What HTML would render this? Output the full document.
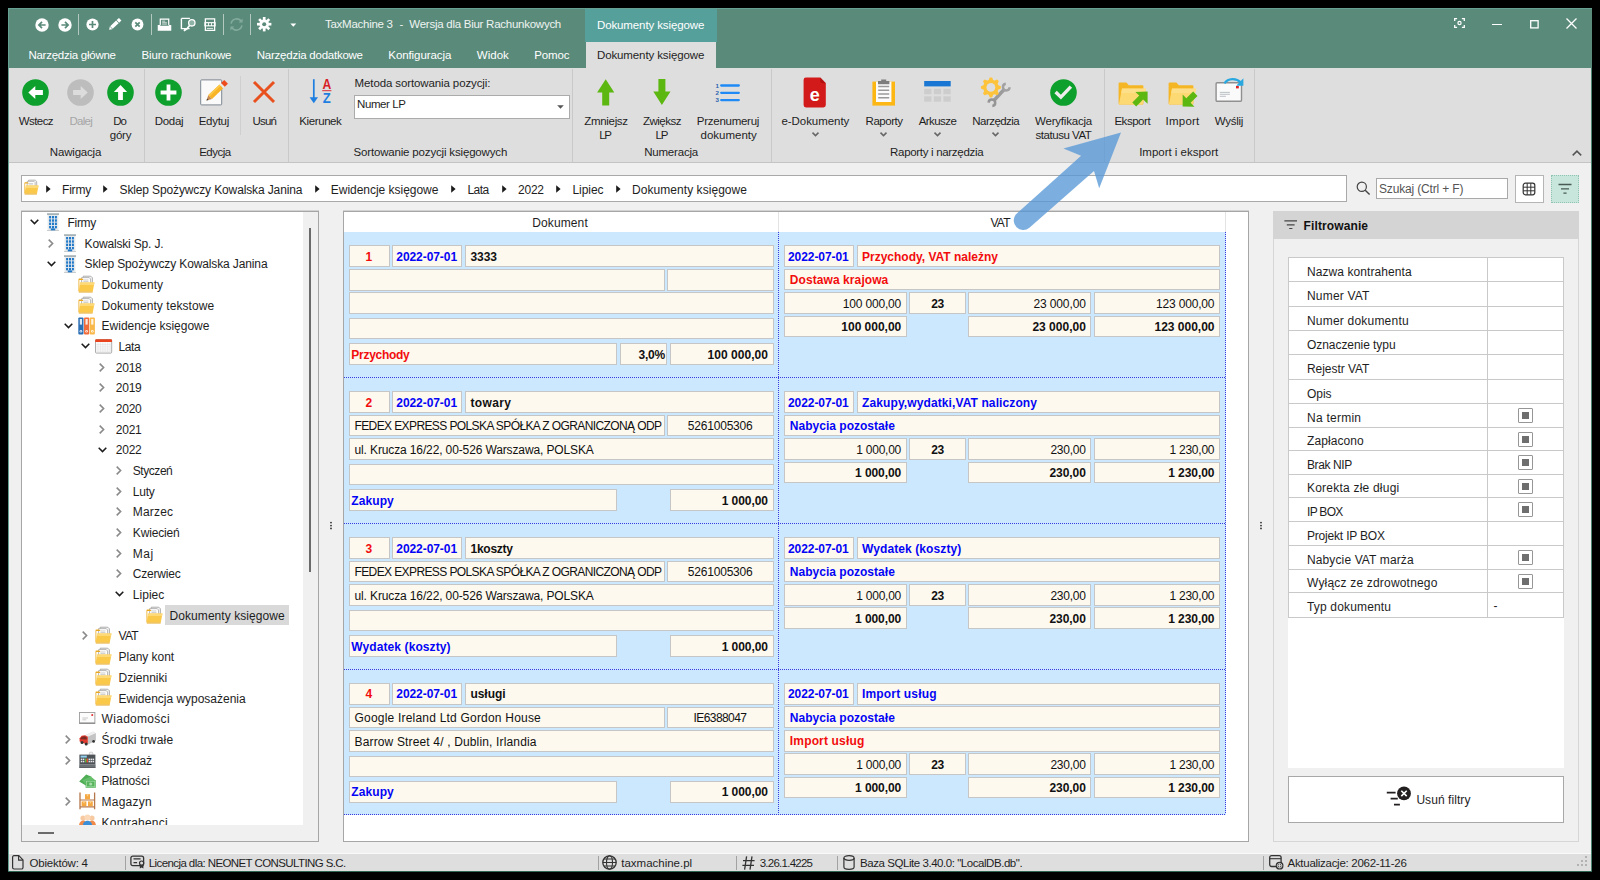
<!DOCTYPE html>
<html lang="pl"><head><meta charset="utf-8"><title>TaxMachine 3 - Dokumenty księgowe</title>
<style>
html,body{margin:0;padding:0;}
body{width:1600px;height:880px;background:#000;overflow:hidden;position:relative;font-family:'Liberation Sans', sans-serif;font-size:12px;color:#1e1e1e;}
.a{position:absolute;box-sizing:border-box;}
.t{white-space:pre;}
svg{overflow:visible;}
</style></head><body>
<div class="a" style="left:8px;top:8px;width:1584px;height:864px;background:#f0f0f0;"></div>
<div class="a" style="left:8px;top:8px;width:1584px;height:60px;background:#5a8a7a;"></div>
<div class="a" style="left:585px;top:8px;width:132px;height:34px;background:#55a09b;"></div>
<div class="a" style="left:586px;top:42px;width:130px;height:26px;background:#dedede;"></div>
<div class="a" style="left:8px;top:68px;width:1584px;height:95px;background:#dedede;border-bottom:1px solid #c4c4c4;"></div>
<div class="a" style="left:8px;top:853px;width:1584px;height:1px;background:#f9f9f9;"></div>
<div class="a" style="left:8px;top:854px;width:1584px;height:18px;background:#dedede;"></div>
<div class="a" style="left:8px;top:8px;width:1px;height:864px;background:#66a092;"></div>
<div class="a" style="left:1591px;top:68px;width:1px;height:804px;background:#4d8573;"></div>
<div class="a" style="left:8px;top:871px;width:1584px;height:1px;background:#2f6553;"></div>
<div class="a" style="left:8px;top:8px;width:1584px;height:1px;background:#66a092;"></div>
<svg class="a" style="left:35.2px;top:17.6px;" width="14" height="14" viewBox="0 0 14 14"><circle cx="7" cy="7" r="6.700" fill="#ffffff"/><path d="M10.600 7H4M7 3.900L3.900 7l3.100 3.100" stroke="#5a8a7a" stroke-width="1.700" fill="none"/></svg>
<svg class="a" style="left:57.6px;top:17.6px;" width="14" height="14" viewBox="0 0 14 14"><circle cx="7" cy="7" r="6.700" fill="#ffffff"/><path d="M3.400 7h6.600M7 3.900L10.100 7 7 10.100" stroke="#5a8a7a" stroke-width="1.700" fill="none"/></svg>
<div class="a" style="left:78px;top:14px;width:1px;height:21px;background:#b3c9c0;"></div>
<div class="a" style="left:151px;top:14px;width:1px;height:21px;background:#b3c9c0;"></div>
<div class="a" style="left:223px;top:14px;width:1px;height:21px;background:#b3c9c0;"></div>
<div class="a" style="left:250px;top:14px;width:1px;height:21px;background:#b3c9c0;"></div>
<svg class="a" style="left:85.5px;top:18px;" width="13" height="13" viewBox="0 0 13 13"><circle cx="6.500" cy="6.500" r="6.100" fill="#ffffff"/><path d="M6.500 3v7M3 6.500h7" stroke="#5a8a7a" stroke-width="1.700"/></svg>
<svg class="a" style="left:107px;top:17px;" width="15" height="15" viewBox="0 0 15 15"><path d="M2.10 12.70L2.82 9.54L5.30 12.15ZM3.19 9.19L9.14 3.56L11.62 6.17L5.66 11.81ZM9.65 3.08L11.96 0.89L14.44 3.51L12.13 5.69Z" fill="#ffffff"/></svg>
<svg class="a" style="left:130.6px;top:18px;" width="13" height="13" viewBox="0 0 13 13"><circle cx="6.500" cy="6.500" r="5.900" fill="#ffffff"/><path d="M4.300 4.300l4.400 4.400M8.700 4.300l-4.400 4.400" stroke="#5a8a7a" stroke-width="1.700"/></svg>
<svg class="a" style="left:156.8px;top:18px;" width="15" height="13.2" viewBox="0 0 16 15"><path d="M0.3 8h15.4v6.5H0.3z" fill="#ffffff"/><path d="M3.2 1.2h9.6v7.5H3.2z" fill="#5a8a7a" stroke="#ffffff" stroke-width="1.4"/><path d="M5.3 3.6h3.5M5.3 5.4h5.4M5.3 7h5.4" stroke="#ffffff" stroke-width="0.8"/><path d="M3.2 8.4h9.6" stroke="#5a8a7a" stroke-width="1"/></svg>
<svg class="a" style="left:179.5px;top:17px;" width="16" height="15" viewBox="0 0 16 15"><path d="M1.4 1.4h8.5M1.4 1.4v10.2h4.2l-1.6 2.2 3.4-2.2h2.2" fill="none" stroke="#ffffff" stroke-width="1.4"/><circle cx="11.8" cy="5.8" r="3.2" fill="#8db3a6" stroke="#ffffff" stroke-width="1.3"/><path d="M9.6 8.4l-3 3.6" stroke="#ffffff" stroke-width="1.6"/></svg>
<svg class="a" style="left:204.3px;top:18px;" width="12" height="13.2" viewBox="0 0 14 15"><path d="M1.6 0.8h10.8v13.4H1.6z" fill="none" stroke="#ffffff" stroke-width="1.5"/><path d="M0.4 4.6h13.2v5H0.4z" fill="#ffffff"/><path d="M2.4 6h2.4v2.2H2.4zM5.8 6h2.4v2.2H5.8zM9.2 6h2.4v2.2H9.2z" fill="#5a8a7a"/><path d="M3.4 12h7.2" stroke="#ffffff" stroke-width="0.9"/></svg>
<svg class="a" style="left:229px;top:17px;" width="15" height="15" viewBox="0 0 15 15"><path d="M2.1 6.6A5.6 5.6 0 0 1 12.4 4.6" fill="none" stroke="#82ab9d" stroke-width="1.6"/><path d="M13.6 1.6v4h-4z" fill="#82ab9d"/><path d="M12.9 8.4A5.6 5.6 0 0 1 2.6 10.4" fill="none" stroke="#82ab9d" stroke-width="1.6"/><path d="M1.4 13.4v-4h4z" fill="#82ab9d"/></svg>
<svg class="a" style="left:257px;top:17.4px;" width="14.4" height="14.4" viewBox="0 0 15 15"><rect x="6.1" y="0" width="2.8" height="3.4" transform="rotate(0 7.5 7.5)" fill="#ffffff"/><rect x="6.1" y="0" width="2.8" height="3.4" transform="rotate(45 7.5 7.5)" fill="#ffffff"/><rect x="6.1" y="0" width="2.8" height="3.4" transform="rotate(90 7.5 7.5)" fill="#ffffff"/><rect x="6.1" y="0" width="2.8" height="3.4" transform="rotate(135 7.5 7.5)" fill="#ffffff"/><rect x="6.1" y="0" width="2.8" height="3.4" transform="rotate(180 7.5 7.5)" fill="#ffffff"/><rect x="6.1" y="0" width="2.8" height="3.4" transform="rotate(225 7.5 7.5)" fill="#ffffff"/><rect x="6.1" y="0" width="2.8" height="3.4" transform="rotate(270 7.5 7.5)" fill="#ffffff"/><rect x="6.1" y="0" width="2.8" height="3.4" transform="rotate(315 7.5 7.5)" fill="#ffffff"/><circle cx="7.5" cy="7.5" r="5" fill="#ffffff"/><circle cx="7.5" cy="7.5" r="2.1" fill="#5a8a7a"/></svg>
<svg class="a" style="left:290.2px;top:23.4px;" width="6.6" height="4" viewBox="0 0 8 5"><path d="M0.300 0.600h7.400L4 4.600z" fill="#ffffff"/></svg>
<span class="a t" style="left:325.00px;top:17px;font-size:11.5px;line-height:15px;color:#eef4f1;letter-spacing:-0.270px;">TaxMachine 3</span>
<span class="a t" style="left:399.50px;top:17px;font-size:11.5px;line-height:15px;color:#eef4f1;">-</span>
<span class="a t" style="left:409.30px;top:17px;font-size:11.5px;line-height:15px;color:#eef4f1;letter-spacing:-0.258px;">Wersja dla Biur Rachunkowych</span>
<span class="a t" style="left:597.00px;top:18px;font-size:11.5px;line-height:15px;color:#ffffff;letter-spacing:-0.118px;">Dokumenty księgowe</span>
<span class="a t" style="left:28.40px;top:48px;font-size:11.5px;line-height:15px;color:#ffffff;letter-spacing:-0.255px;">Narzędzia główne</span>
<span class="a t" style="left:141.50px;top:48px;font-size:11.5px;line-height:15px;color:#ffffff;letter-spacing:-0.138px;">Biuro rachunkowe</span>
<span class="a t" style="left:256.80px;top:48px;font-size:11.5px;line-height:15px;color:#ffffff;letter-spacing:-0.244px;">Narzędzia dodatkowe</span>
<span class="a t" style="left:388.30px;top:48px;font-size:11.5px;line-height:15px;color:#ffffff;letter-spacing:-0.085px;">Konfiguracja</span>
<span class="a t" style="left:476.80px;top:48px;font-size:11.5px;line-height:15px;color:#ffffff;letter-spacing:0.012px;">Widok</span>
<span class="a t" style="left:534.30px;top:48px;font-size:11.5px;line-height:15px;color:#ffffff;letter-spacing:-0.149px;">Pomoc</span>
<span class="a t" style="left:597.00px;top:48px;font-size:11.5px;line-height:15px;color:#1e1e1e;letter-spacing:-0.118px;">Dokumenty księgowe</span>
<svg class="a" style="left:1453.7px;top:18.4px;" width="11" height="10" viewBox="0 0 11 10"><path d="M0.700 3V0.700h2.400M7.900 0.700h2.400V3M10.300 7v2.300H7.900M3.100 9.300H0.700V7" fill="none" stroke="#ffffff" stroke-width="1.300"/><circle cx="5.500" cy="5" r="1.600" fill="none" stroke="#ffffff" stroke-width="1.200"/></svg>
<div class="a" style="left:1492px;top:23.5px;width:9.5px;height:1.4px;background:#ffffff;"></div>
<svg class="a" style="left:1529.5px;top:19.5px;" width="9" height="9" viewBox="0 0 9 9"><rect x="0.700" y="0.700" width="7.400" height="7.200" fill="none" stroke="#ffffff" stroke-width="1.300"/></svg>
<svg class="a" style="left:1566px;top:18px;" width="11" height="11" viewBox="0 0 11 11"><path d="M0.5 0.5l10 10M10.5 0.5l-10 10" stroke="#ffffff" stroke-width="1.300"/></svg>
<div class="a" style="left:143.5px;top:69px;width:1px;height:93px;background:#c9c9c9;"></div>
<div class="a" style="left:288px;top:69px;width:1px;height:93px;background:#c9c9c9;"></div>
<div class="a" style="left:572px;top:69px;width:1px;height:93px;background:#c9c9c9;"></div>
<div class="a" style="left:770.5px;top:69px;width:1px;height:93px;background:#c9c9c9;"></div>
<div class="a" style="left:1103.5px;top:69px;width:1px;height:93px;background:#c9c9c9;"></div>
<div class="a" style="left:1254px;top:69px;width:1px;height:93px;background:#c9c9c9;"></div>
<div class="a" style="left:240px;top:76px;width:1px;height:59px;background:#cfcfcf;"></div>
<svg class="a" style="left:22.0px;top:78.7px;" width="27" height="27" viewBox="0 0 27 27"><circle cx="13.5" cy="13.5" r="13.3" fill="#0da02c"/><path d="M6.3 13.5l7-6.6v4.2h7.6v4.8h-7.6v4.2z" fill="#fff"/></svg>
<svg class="a" style="left:67.3px;top:78.7px;" width="27" height="27" viewBox="0 0 27 27"><circle cx="13.5" cy="13.5" r="13.3" fill="#bdbdbd"/><path d="M20.7 13.5l-7-6.6v4.2H6.1v4.8h7.6v4.2z" fill="#dcdcdc"/></svg>
<svg class="a" style="left:106.8px;top:78.7px;" width="27" height="27" viewBox="0 0 27 27"><circle cx="13.5" cy="13.5" r="13.3" fill="#0da02c"/><path d="M13.5 6.1l6.6 7h-4.2v7.8h-4.8v-7.8H6.9z" fill="#fff"/></svg>
<svg class="a" style="left:154.9px;top:78.7px;" width="27" height="27" viewBox="0 0 27 27"><circle cx="13.5" cy="13.5" r="13.3" fill="#0da02c"/><path d="M11.600 5.600h3.800v6h6v3.800h-6v6h-3.800v-6H5.600v-3.800h6z" fill="#fff"/></svg>
<svg class="a" style="left:199px;top:78px;" width="30" height="29" viewBox="0 0 30 29"><rect x="1.700" y="1.900" width="21" height="25" rx="0.800" fill="#fafafa" stroke="#7d8892" stroke-width="1"/><path d="M7.45 22.60L9.38 17.09L13.04 20.92Z" fill="#c98a4f"/><path d="M7.45 22.60L8.15 20.59L9.49 21.99Z" fill="#3a3a3a"/><path d="M9.38 17.09L20.50 6.44L24.17 10.27L13.04 20.92Z" fill="#f8b425"/><path d="M9.38 17.09L20.50 6.44L21.75 7.74L10.62 18.39Z" fill="#fcc84a"/><path d="M20.50 6.44L22.09 4.92L25.76 8.75L24.17 10.27Z" fill="#ecebe6"/><path d="M22.09 4.92L25.27 1.89L28.93 5.71L25.76 8.75Z" fill="#ee4b1d"/></svg>
<svg class="a" style="left:252px;top:80px;" width="24" height="24" viewBox="0 0 24 24"><path d="M2 2l20 20M22 2L2 22" stroke="#e8501e" stroke-width="3" fill="none"/></svg>
<svg class="a" style="left:308px;top:77px;" width="26" height="28" viewBox="0 0 26 28"><path d="M5.8 2.2v21" stroke="#1e7fe0" stroke-width="1.7"/><path d="M1.6 20.2l4.2 6 4.2-6z" fill="#1e7fe0"/><text x="14.400" y="12.400" font-family="'Liberation Sans',sans-serif" font-weight="700" font-size="14" fill="#d81e26" textLength="8.800" lengthAdjust="spacingAndGlyphs">A</text><path d="M14.200 13.700h9.200" stroke="#d81e26" stroke-width="0.900"/><text x="14.800" y="26" font-family="'Liberation Sans',sans-serif" font-weight="700" font-size="14" fill="#1e7fe0" textLength="8" lengthAdjust="spacingAndGlyphs">Z</text></svg>
<svg class="a" style="left:596px;top:78px;" width="20" height="28" viewBox="0 0 20 28"><path d="M9.7 1.2l8.6 13.4h-5.1v12.8H6.2V14.6H1.1z" fill="#5cb811"/></svg>
<svg class="a" style="left:652px;top:78px;" width="20" height="28" viewBox="0 0 20 28"><path d="M9.9 26.9l8.6-13.4h-5.1V0.9H6.4v12.6H1.3z" fill="#5cb811"/></svg>
<svg class="a" style="left:714px;top:81px;" width="28" height="24" viewBox="0 0 28 24"><path d="M7.2 4.5h17.6M7.2 11.8h17.6M7.2 19.1h17.6" stroke="#1f8af6" stroke-width="2.3" stroke-linecap="round"/><text x="1.6" y="6.6" font-family="'Liberation Sans',sans-serif" font-weight="700" font-size="6.2" fill="#2d62b0">1</text><text x="1.6" y="13.9" font-family="'Liberation Sans',sans-serif" font-weight="700" font-size="6.2" fill="#2d62b0">2</text><text x="1.6" y="21.2" font-family="'Liberation Sans',sans-serif" font-weight="700" font-size="6.2" fill="#2d62b0">3</text></svg>
<svg class="a" style="left:803px;top:76.5px;" width="24" height="31" viewBox="0 0 24 31"><path d="M3 0.6h14.2l5.6 5.6V28a2.4 2.4 0 0 1-2.4 2.4H3A2.4 2.4 0 0 1 .6 28V3A2.4 2.4 0 0 1 3 .6z" fill="#d21a1a"/><path d="M17.2 0.6v3.4a2.2 2.2 0 0 0 2.2 2.2h3.4z" fill="#b51010"/><text x="11.8" y="23.6" font-family="'Liberation Sans',sans-serif" font-weight="700" font-size="18" fill="#fff" text-anchor="middle">e</text></svg>
<svg class="a" style="left:872px;top:78.5px;" width="24" height="27" viewBox="0 0 24 27"><path d="M0.4 2.6h22.6v24H0.4z" fill="#fdb714"/><path d="M4 2.6h15.4v20.4H4z" fill="#fbfbfb"/><path d="M6 1.9h3.2v-1.3h5v1.3h3.2v3.4H6z" fill="#7d7d7d"/><path d="M6.2 7.6h11M6.2 11.3h11M6.2 15h11M6.2 18.7h11" stroke="#9a9a9a" stroke-width="1.5"/></svg>
<svg class="a" style="left:924px;top:81px;" width="27" height="21" viewBox="0 0 27 21"><rect x="0.2" y="0" width="26.5" height="5.4" fill="#1976d2"/><rect x="0.2" y="7.8" width="7.3" height="5.4" fill="#cdcdcd"/><rect x="9.8" y="7.8" width="7.3" height="5.4" fill="#cdcdcd"/><rect x="19.4" y="7.8" width="7.3" height="5.4" fill="#cdcdcd"/><rect x="0.2" y="15.3" width="7.3" height="5.4" fill="#cdcdcd"/><rect x="9.8" y="15.3" width="7.3" height="5.4" fill="#cdcdcd"/><rect x="19.4" y="15.3" width="7.3" height="5.4" fill="#cdcdcd"/></svg>
<svg class="a" style="left:980px;top:76px;" width="32" height="32" viewBox="0 0 32 32"><path d="M13.66 24.83L24.49 13.02" stroke="#9b9b9b" stroke-width="3.500" fill="none"/><path d="M8.60 26.60A3.3 3.3 0 1 1 12.33 30.02" stroke="#959595" stroke-width="2.500" fill="none"/><path d="M29.55 11.25A3.3 3.3 0 1 1 25.82 7.83" stroke="#a2a2a2" stroke-width="2.500" fill="none"/><path d="M10.90 1.40L11.29 1.41L11.68 1.43L12.07 1.54L12.37 2.10L12.63 2.72L12.83 3.35L13.01 3.92L13.28 4.08L13.57 4.18L13.85 4.29L14.12 4.41L14.40 4.54L14.70 4.62L15.23 4.34L15.82 4.04L16.44 3.78L17.05 3.60L17.39 3.80L17.69 4.06L17.97 4.33L18.24 4.61L18.50 4.91L18.70 5.25L18.52 5.86L18.26 6.48L17.96 7.07L17.68 7.60L17.76 7.90L17.89 8.18L18.01 8.45L18.12 8.73L18.22 9.02L18.38 9.29L18.95 9.47L19.58 9.67L20.20 9.93L20.76 10.23L20.87 10.62L20.89 11.01L20.90 11.40L20.89 11.79L20.87 12.18L20.76 12.57L20.20 12.87L19.58 13.13L18.95 13.33L18.38 13.51L18.22 13.78L18.12 14.07L18.01 14.35L17.89 14.62L17.76 14.90L17.68 15.20L17.96 15.73L18.26 16.32L18.52 16.94L18.70 17.55L18.50 17.89L18.24 18.19L17.97 18.47L17.69 18.74L17.39 19.00L17.05 19.20L16.44 19.02L15.82 18.76L15.23 18.46L14.70 18.18L14.40 18.26L14.12 18.39L13.85 18.51L13.57 18.62L13.28 18.72L13.01 18.88L12.83 19.45L12.63 20.08L12.37 20.70L12.07 21.26L11.68 21.37L11.29 21.39L10.90 21.40L10.51 21.39L10.12 21.37L9.73 21.26L9.43 20.70L9.17 20.08L8.97 19.45L8.79 18.88L8.52 18.72L8.23 18.62L7.95 18.51L7.68 18.39L7.40 18.26L7.10 18.18L6.57 18.46L5.98 18.76L5.36 19.02L4.75 19.20L4.41 19.00L4.11 18.74L3.83 18.47L3.56 18.19L3.30 17.89L3.10 17.55L3.28 16.94L3.54 16.32L3.84 15.73L4.12 15.20L4.04 14.90L3.91 14.62L3.79 14.35L3.68 14.07L3.58 13.78L3.42 13.51L2.85 13.33L2.22 13.13L1.60 12.87L1.04 12.57L0.93 12.18L0.91 11.79L0.90 11.40L0.91 11.01L0.93 10.62L1.04 10.23L1.60 9.93L2.22 9.67L2.85 9.47L3.42 9.29L3.58 9.02L3.68 8.73L3.79 8.45L3.91 8.18L4.04 7.90L4.12 7.60L3.84 7.07L3.54 6.48L3.28 5.86L3.10 5.25L3.30 4.91L3.56 4.61L3.83 4.33L4.11 4.06L4.41 3.80L4.75 3.60L5.36 3.78L5.98 4.04L6.57 4.34L7.10 4.62L7.40 4.54L7.68 4.41L7.95 4.29L8.23 4.18L8.52 4.08L8.79 3.92L8.97 3.35L9.17 2.72L9.43 2.10L9.73 1.54L10.12 1.43L10.51 1.41Z" fill="#fdc33a"/><circle cx="10.90" cy="11.40" r="4.400" fill="#dedede"/></svg>
<svg class="a" style="left:1049.7px;top:78.7px;" width="27" height="27" viewBox="0 0 27 27"><circle cx="13.5" cy="13.5" r="13.3" fill="#0da02c"/><path d="M5.600 13l5.300 5.200 10-10.500" stroke="#ededed" stroke-width="3.400" fill="none"/></svg>
<svg class="a" style="left:1117.6px;top:82.4px;" width="31" height="26" viewBox="0 0 31 26"><path d="M0.6 1.6a1 1 0 0 1 1-1h6.8l2.4 2.6h13.6a1 1 0 0 1 1 1V21.4a1 1 0 0 1-1 1H1.6a1 1 0 0 1-1-1z" fill="#f5b626"/><path d="M4 6.4h24.2L24.8 22.4H0.9z" fill="#fdd974"/><path d="M4 6.4h24.2l-1 4.6H3z" fill="#fee39a" opacity=".6"/><path d="M29.600 9.500V21.800L25.100 17.500L18.200 24.400L14.300 20.500L21.200 13.600L17.300 9.900Z" fill="#5cb811"/></svg>
<svg class="a" style="left:1168.4px;top:82.4px;" width="31" height="26" viewBox="0 0 31 26"><path d="M0.6 1.6a1 1 0 0 1 1-1h6.8l2.4 2.6h13.6a1 1 0 0 1 1 1V21.4a1 1 0 0 1-1 1H1.6a1 1 0 0 1-1-1z" fill="#f5b626"/><path d="M4 6.4h24.2L24.8 22.4H0.9z" fill="#fdd974"/><path d="M4 6.4h24.2l-1 4.6H3z" fill="#fee39a" opacity=".6"/><path d="M14.650 24.400V12.600L18.300 16.300L25.150 9.500L29.500 13.900L22.650 20.800L26.500 24.700Z" fill="#5cb811"/></svg>
<svg class="a" style="left:1214px;top:77px;" width="31" height="26" viewBox="0 0 31 26"><rect x="2.100" y="5.700" width="25.400" height="18.500" rx="1" fill="#fafafa" stroke="#8f8f8f" stroke-width="1.400"/><path d="M5.800 15.400h10.100M5.800 17.300h10.100M5.800 19.300h6.100" stroke="#b4bac0" stroke-width="0.900"/><rect x="22" y="9" width="2.8" height="2.4" fill="#e02424"/><path d="M10.4 6.4C14 1.2 22 0.6 27 5.6" fill="none" stroke="#29a8e0" stroke-width="2.300"/><path d="M29.4 1.2v7.6h-7.2z" fill="#29a8e0"/></svg>
<svg class="a" style="left:811.5px;top:132.4px;" width="7" height="5" viewBox="0 0 7 5"><path d="M0.5 0.6l3 3 3-3" fill="none" stroke="#666" stroke-width="1.500"/></svg>
<svg class="a" style="left:880.3px;top:132.4px;" width="7" height="5" viewBox="0 0 7 5"><path d="M0.5 0.6l3 3 3-3" fill="none" stroke="#666" stroke-width="1.500"/></svg>
<svg class="a" style="left:933.7px;top:132.4px;" width="7" height="5" viewBox="0 0 7 5"><path d="M0.5 0.6l3 3 3-3" fill="none" stroke="#666" stroke-width="1.500"/></svg>
<svg class="a" style="left:992.2px;top:132.4px;" width="7" height="5" viewBox="0 0 7 5"><path d="M0.5 0.6l3 3 3-3" fill="none" stroke="#666" stroke-width="1.500"/></svg>
<span class="a t" style="left:18.80px;top:114px;font-size:11.5px;line-height:15px;color:#1e1e1e;letter-spacing:-0.581px;">Wstecz</span>
<span class="a t" style="left:69.50px;top:114px;font-size:11.5px;line-height:15px;color:#a6a6a6;letter-spacing:-0.755px;">Dalej</span>
<span class="a t" style="left:113.20px;top:114px;font-size:11.5px;line-height:15px;color:#1e1e1e;letter-spacing:-1.103px;">Do</span>
<span class="a t" style="left:109.65px;top:128px;font-size:11.5px;line-height:15px;color:#1e1e1e;letter-spacing:-0.158px;">góry</span>
<span class="a t" style="left:154.70px;top:114px;font-size:11.5px;line-height:15px;color:#1e1e1e;letter-spacing:-0.266px;">Dodaj</span>
<span class="a t" style="left:198.70px;top:114px;font-size:11.5px;line-height:15px;color:#1e1e1e;letter-spacing:-0.274px;">Edytuj</span>
<span class="a t" style="left:252.50px;top:114px;font-size:11.5px;line-height:15px;color:#1e1e1e;letter-spacing:-0.820px;">Usuń</span>
<span class="a t" style="left:299.35px;top:114px;font-size:11.5px;line-height:15px;color:#1e1e1e;letter-spacing:-0.413px;">Kierunek</span>
<span class="a t" style="left:584.35px;top:114px;font-size:11.5px;line-height:15px;color:#1e1e1e;letter-spacing:-0.331px;">Zmniejsz</span>
<span class="a t" style="left:599.16px;top:128px;font-size:11.5px;line-height:15px;color:#1e1e1e;letter-spacing:-1.200px;">LP</span>
<span class="a t" style="left:643.00px;top:114px;font-size:11.5px;line-height:15px;color:#1e1e1e;letter-spacing:-0.522px;">Zwiększ</span>
<span class="a t" style="left:655.56px;top:128px;font-size:11.5px;line-height:15px;color:#1e1e1e;letter-spacing:-1.200px;">LP</span>
<span class="a t" style="left:696.85px;top:114px;font-size:11.5px;line-height:15px;color:#1e1e1e;letter-spacing:-0.270px;">Przenumeruj</span>
<span class="a t" style="left:700.55px;top:128px;font-size:11.5px;line-height:15px;color:#1e1e1e;">dokumenty</span>
<span class="a t" style="left:781.45px;top:114px;font-size:11.5px;line-height:15px;color:#1e1e1e;letter-spacing:-0.049px;">e-Dokumenty</span>
<span class="a t" style="left:865.55px;top:114px;font-size:11.5px;line-height:15px;color:#1e1e1e;letter-spacing:-0.464px;">Raporty</span>
<span class="a t" style="left:918.75px;top:114px;font-size:11.5px;line-height:15px;color:#1e1e1e;letter-spacing:-0.574px;">Arkusze</span>
<span class="a t" style="left:972.30px;top:114px;font-size:11.5px;line-height:15px;color:#1e1e1e;letter-spacing:-0.548px;">Narzędzia</span>
<span class="a t" style="left:1035.00px;top:114px;font-size:11.5px;line-height:15px;color:#1e1e1e;letter-spacing:-0.202px;">Weryfikacja</span>
<span class="a t" style="left:1035.55px;top:128px;font-size:11.5px;line-height:15px;color:#1e1e1e;letter-spacing:-0.464px;">statusu VAT</span>
<span class="a t" style="left:1114.40px;top:114px;font-size:11.5px;line-height:15px;color:#1e1e1e;letter-spacing:-0.467px;">Eksport</span>
<span class="a t" style="left:1165.55px;top:114px;font-size:11.5px;line-height:15px;color:#1e1e1e;letter-spacing:0.221px;">Import</span>
<span class="a t" style="left:1214.65px;top:114px;font-size:11.5px;line-height:15px;color:#1e1e1e;letter-spacing:-0.244px;">Wyślij</span>
<span class="a t" style="left:49.80px;top:145px;font-size:11.5px;line-height:15px;color:#1e1e1e;letter-spacing:-0.183px;">Nawigacja</span>
<span class="a t" style="left:199.20px;top:145px;font-size:11.5px;line-height:15px;color:#1e1e1e;letter-spacing:-0.506px;">Edycja</span>
<span class="a t" style="left:353.50px;top:145px;font-size:11.5px;line-height:15px;color:#1e1e1e;letter-spacing:-0.169px;">Sortowanie pozycji księgowych</span>
<span class="a t" style="left:644.20px;top:145px;font-size:11.5px;line-height:15px;color:#1e1e1e;letter-spacing:-0.201px;">Numeracja</span>
<span class="a t" style="left:890.05px;top:145px;font-size:11.5px;line-height:15px;color:#1e1e1e;letter-spacing:-0.310px;">Raporty i narzędzia</span>
<span class="a t" style="left:1139.20px;top:145px;font-size:11.5px;line-height:15px;color:#1e1e1e;letter-spacing:-0.017px;">Import i eksport</span>
<span class="a t" style="left:354.60px;top:76px;font-size:11.5px;line-height:15px;color:#1e1e1e;letter-spacing:-0.117px;">Metoda sortowania pozycji:</span>
<div class="a" style="left:353.5px;top:94.5px;width:216px;height:24px;background:#fff;border:1px solid #ababab;"></div>
<span class="a t" style="left:357.00px;top:97px;font-size:11.5px;line-height:15px;color:#1e1e1e;letter-spacing:-0.397px;">Numer LP</span>
<svg class="a" style="left:556.5px;top:104.5px;" width="7" height="4" viewBox="0 0 7 4"><path d="M0.2 0.3h6.6L3.5 3.7z" fill="#555"/></svg>
<svg class="a" style="left:1572.4px;top:149.8px;" width="10" height="7" viewBox="0 0 10 7"><path d="M0.700 5.400l4.250-4.300 4.250 4.300" fill="none" stroke="#555" stroke-width="1.500"/></svg>
<div class="a" style="left:21px;top:175px;width:1326px;height:27px;background:#fff;border:1px solid #a9a9a9;"></div>
<svg class="a" style="left:23.5px;top:179px;" width="15" height="16" viewBox="0 0 17 18"><path d="M5.2 1.2h7.6l1.6 1.6v6H5.2z" fill="#f4f4f4" stroke="#9b9b9b" stroke-width=".8"/><path d="M3.6 2.6h7.6l1.4 1.4v6H3.6z" fill="#fdfdfd" stroke="#a5a5a5" stroke-width=".8"/><path d="M5.4 5h5M5.4 6.6h5" stroke="#b9b9b9" stroke-width=".7"/><path d="M0.5 4.4a.8.8 0 0 1 .8-.8h3l1.2 1.4h-4.2v11h-.8z" fill="#e9a820"/><path d="M2.2 7.4h14.3l-1.7 9.1H0.6z" fill="#fbc94a"/><path d="M2.2 7.4h14.3l-.5 2.6H1.8z" fill="#fdd977"/><path d="M0.6 16.5h14.2l-.2.9H0.8z" fill="#e8a51c"/></svg>
<span class="a t" style="left:62.00px;top:182px;font-size:12px;line-height:16px;color:#1e1e1e;letter-spacing:-0.200px;">Firmy</span>
<svg class="a" style="left:45.8px;top:184.6px;" width="5" height="8" viewBox="0 0 5 8"><path d="M0.2 0.3l4.4 3.7-4.400 3.700z" fill="#1a1a1a"/></svg>
<span class="a t" style="left:119.50px;top:182px;font-size:12px;line-height:16px;color:#1e1e1e;letter-spacing:-0.126px;">Sklep Spożywczy Kowalska Janina</span>
<svg class="a" style="left:103.3px;top:184.6px;" width="5" height="8" viewBox="0 0 5 8"><path d="M0.2 0.3l4.4 3.7-4.400 3.700z" fill="#1a1a1a"/></svg>
<span class="a t" style="left:330.80px;top:182px;font-size:12px;line-height:16px;color:#1e1e1e;letter-spacing:-0.027px;">Ewidencje księgowe</span>
<svg class="a" style="left:314.6px;top:184.6px;" width="5" height="8" viewBox="0 0 5 8"><path d="M0.2 0.3l4.4 3.7-4.400 3.700z" fill="#1a1a1a"/></svg>
<span class="a t" style="left:467.50px;top:182px;font-size:12px;line-height:16px;color:#1e1e1e;letter-spacing:-0.586px;">Lata</span>
<svg class="a" style="left:451.3px;top:184.6px;" width="5" height="8" viewBox="0 0 5 8"><path d="M0.2 0.3l4.4 3.7-4.400 3.700z" fill="#1a1a1a"/></svg>
<span class="a t" style="left:518.00px;top:182px;font-size:12px;line-height:16px;color:#1e1e1e;letter-spacing:-0.234px;">2022</span>
<svg class="a" style="left:501.8px;top:184.6px;" width="5" height="8" viewBox="0 0 5 8"><path d="M0.2 0.3l4.4 3.7-4.400 3.700z" fill="#1a1a1a"/></svg>
<span class="a t" style="left:572.50px;top:182px;font-size:12px;line-height:16px;color:#1e1e1e;letter-spacing:-0.072px;">Lipiec</span>
<svg class="a" style="left:556.3px;top:184.6px;" width="5" height="8" viewBox="0 0 5 8"><path d="M0.2 0.3l4.4 3.7-4.400 3.700z" fill="#1a1a1a"/></svg>
<span class="a t" style="left:632.00px;top:182px;font-size:12px;line-height:16px;color:#1e1e1e;letter-spacing:0.055px;">Dokumenty księgowe</span>
<svg class="a" style="left:615.8px;top:184.6px;" width="5" height="8" viewBox="0 0 5 8"><path d="M0.2 0.3l4.4 3.7-4.400 3.700z" fill="#1a1a1a"/></svg>
<svg class="a" style="left:1355.5px;top:181px;" width="15" height="15" viewBox="0 0 15 15"><circle cx="5.800" cy="5.800" r="4.600" fill="none" stroke="#444" stroke-width="1.2"/><path d="M9.200 9.200l4.400 4.400" stroke="#444" stroke-width="1.400"/></svg>
<div class="a" style="left:1376px;top:178px;width:132px;height:21px;background:#fff;border:1px solid #a9a9a9;"></div>
<span class="a t" style="left:1379.00px;top:181px;font-size:12px;line-height:16px;color:#555;letter-spacing:-0.157px;">Szukaj (Ctrl + F)</span>
<div class="a" style="left:1515px;top:175px;width:29px;height:28px;background:#fff;border:1px solid #b5b5b5;"></div>
<svg class="a" style="left:1522px;top:182px;" width="14" height="14" viewBox="0 0 14 14"><rect x="1.200" y="1.200" width="11.600" height="11.600" rx="2.200" fill="none" stroke="#333" stroke-width="1.200"/><path d="M5.200 1.200v11.600M8.800 1.200v11.600M1.200 5.200h11.600M1.200 8.800h11.600" stroke="#333" stroke-width="1"/></svg>
<div class="a" style="left:1551px;top:175px;width:28px;height:28px;background:#c9e6dd;border:1px dotted #8fc4b3;"></div>
<svg class="a" style="left:1558px;top:183px;" width="14" height="12" viewBox="0 0 14 12"><path d="M0.500 1.500h13M3 5.800h8M5.400 10.100h3.200" stroke="#4a5a55" stroke-width="1.300"/></svg>
<svg class="a" style="left:328.8px;top:520px;" width="4" height="12" viewBox="0 0 4 12"><circle cx="2" cy="2.6" r=".9" fill="#2e2e2e"/><circle cx="2" cy="5.6" r=".9" fill="#2e2e2e"/><circle cx="2" cy="8.4" r=".9" fill="#2e2e2e"/></svg>
<svg class="a" style="left:1258.6px;top:520px;" width="4" height="12" viewBox="0 0 4 12"><circle cx="2" cy="2.6" r=".9" fill="#2e2e2e"/><circle cx="2" cy="5.6" r=".9" fill="#2e2e2e"/><circle cx="2" cy="8.4" r=".9" fill="#2e2e2e"/></svg>
<div class="a" style="left:21px;top:211px;width:298px;height:631px;background:#fff;border:1px solid #a6a6a6;"></div>
<div class="a" style="left:21px;top:210px;width:298px;height:1px;background:#d2d2d2;"></div>
<div class="a" style="left:303px;top:212px;width:15px;height:613px;background:#f0f0f0;"></div>
<div class="a" style="left:309.4px;top:228px;width:2px;height:344px;background:#6b6b6b;"></div>
<div class="a" style="left:22px;top:825px;width:296px;height:16px;background:#f0f0f0;"></div>
<div class="a" style="left:37.5px;top:832px;width:16px;height:2px;background:#6b6b6b;"></div>
<div class="a" style="left:22px;top:212px;width:281px;height:613px;overflow:hidden">
<svg class="a" style="left:7.5px;top:7.25px;" width="9" height="6" viewBox="0 0 9 6"><path d="M0.700 0.700l3.800 3.900 3.800-3.900" fill="none" stroke="#1c1c1c" stroke-width="1.500"/></svg>
<svg class="a" style="left:25px;top:1.25px;" width="12" height="18" viewBox="0 0 12 18"><rect x="0.6" y="1" width="10.8" height="16.6" fill="#e7eaec"/><rect x="0" y="0.4" width="12" height="1.3" fill="#8c9aa0"/><rect x="0" y="17.2" width="12" height=".7" fill="#b8bcbe"/><rect x="2.1" y="3" width="2" height="2.4" fill="#1f78c8"/><rect x="5" y="3" width="2" height="2.4" fill="#1f78c8"/><rect x="7.9" y="3" width="2" height="2.4" fill="#1f78c8"/><rect x="2.1" y="6.3" width="2" height="2.4" fill="#1f78c8"/><rect x="5" y="6.3" width="2" height="2.4" fill="#1f78c8"/><rect x="7.9" y="6.3" width="2" height="2.4" fill="#1f78c8"/><rect x="2.1" y="9.6" width="2" height="2.4" fill="#1f78c8"/><rect x="5" y="9.6" width="2" height="2.4" fill="#1f78c8"/><rect x="7.9" y="9.6" width="2" height="2.4" fill="#1f78c8"/><rect x="2.1" y="12.9" width="2" height="2.4" fill="#1f78c8"/><rect x="5" y="12.9" width="2" height="2.4" fill="#1f78c8"/><rect x="7.9" y="12.9" width="2" height="2.4" fill="#1f78c8"/><rect x="3.8" y="15.4" width="4.4" height="1.9" fill="#1f78c8"/></svg>
<span class="a t" style="left:45.60px;top:3px;font-size:12px;line-height:16px;color:#1e1e1e;letter-spacing:-0.350px;">Firmy</span>
<svg class="a" style="left:26.4px;top:26.53px;" width="6" height="9" viewBox="0 0 6 9"><path d="M0.700 0.600l3.900 3.900-3.900 3.900" fill="none" stroke="#8a8a8a" stroke-width="1.600"/></svg>
<svg class="a" style="left:42px;top:21.930000000000007px;" width="12" height="18" viewBox="0 0 12 18"><rect x="0.6" y="1" width="10.8" height="16.6" fill="#e7eaec"/><rect x="0" y="0.4" width="12" height="1.3" fill="#8c9aa0"/><rect x="0" y="17.2" width="12" height=".7" fill="#b8bcbe"/><rect x="2.1" y="3" width="2" height="2.4" fill="#1f78c8"/><rect x="5" y="3" width="2" height="2.4" fill="#1f78c8"/><rect x="7.9" y="3" width="2" height="2.4" fill="#1f78c8"/><rect x="2.1" y="6.3" width="2" height="2.4" fill="#1f78c8"/><rect x="5" y="6.3" width="2" height="2.4" fill="#1f78c8"/><rect x="7.9" y="6.3" width="2" height="2.4" fill="#1f78c8"/><rect x="2.1" y="9.6" width="2" height="2.4" fill="#1f78c8"/><rect x="5" y="9.6" width="2" height="2.4" fill="#1f78c8"/><rect x="7.9" y="9.6" width="2" height="2.4" fill="#1f78c8"/><rect x="2.1" y="12.9" width="2" height="2.4" fill="#1f78c8"/><rect x="5" y="12.9" width="2" height="2.4" fill="#1f78c8"/><rect x="7.9" y="12.9" width="2" height="2.4" fill="#1f78c8"/><rect x="3.8" y="15.4" width="4.4" height="1.9" fill="#1f78c8"/></svg>
<span class="a t" style="left:62.60px;top:24px;font-size:12px;line-height:16px;color:#1e1e1e;letter-spacing:-0.170px;">Kowalski Sp. J.</span>
<svg class="a" style="left:24.5px;top:48.610000000000014px;" width="9" height="6" viewBox="0 0 9 6"><path d="M0.700 0.700l3.800 3.900 3.800-3.900" fill="none" stroke="#1c1c1c" stroke-width="1.500"/></svg>
<svg class="a" style="left:42px;top:42.610000000000014px;" width="12" height="18" viewBox="0 0 12 18"><rect x="0.6" y="1" width="10.8" height="16.6" fill="#e7eaec"/><rect x="0" y="0.4" width="12" height="1.3" fill="#8c9aa0"/><rect x="0" y="17.2" width="12" height=".7" fill="#b8bcbe"/><rect x="2.1" y="3" width="2" height="2.4" fill="#1f78c8"/><rect x="5" y="3" width="2" height="2.4" fill="#1f78c8"/><rect x="7.9" y="3" width="2" height="2.4" fill="#1f78c8"/><rect x="2.1" y="6.3" width="2" height="2.4" fill="#1f78c8"/><rect x="5" y="6.3" width="2" height="2.4" fill="#1f78c8"/><rect x="7.9" y="6.3" width="2" height="2.4" fill="#1f78c8"/><rect x="2.1" y="9.6" width="2" height="2.4" fill="#1f78c8"/><rect x="5" y="9.6" width="2" height="2.4" fill="#1f78c8"/><rect x="7.9" y="9.6" width="2" height="2.4" fill="#1f78c8"/><rect x="2.1" y="12.9" width="2" height="2.4" fill="#1f78c8"/><rect x="5" y="12.9" width="2" height="2.4" fill="#1f78c8"/><rect x="7.9" y="12.9" width="2" height="2.4" fill="#1f78c8"/><rect x="3.8" y="15.4" width="4.4" height="1.9" fill="#1f78c8"/></svg>
<span class="a t" style="left:62.60px;top:44px;font-size:12px;line-height:16px;color:#1e1e1e;letter-spacing:-0.126px;">Sklep Spożywczy Kowalska Janina</span>
<svg class="a" style="left:55.900000000000006px;top:62.89000000000004px;" width="17" height="18" viewBox="0 0 17 18"><path d="M5.2 1.2h7.6l1.6 1.6v6H5.2z" fill="#f4f4f4" stroke="#9b9b9b" stroke-width=".8"/><path d="M3.6 2.6h7.6l1.4 1.4v6H3.6z" fill="#fdfdfd" stroke="#a5a5a5" stroke-width=".8"/><path d="M5.4 5h5M5.4 6.6h5" stroke="#b9b9b9" stroke-width=".7"/><path d="M0.5 4.4a.8.8 0 0 1 .8-.8h3l1.2 1.4h-4.2v11h-.8z" fill="#e9a820"/><path d="M2.2 7.4h14.3l-1.7 9.1H0.6z" fill="#fbc94a"/><path d="M2.2 7.4h14.3l-.5 2.6H1.8z" fill="#fdd977"/><path d="M0.6 16.5h14.2l-.2.9H0.8z" fill="#e8a51c"/></svg>
<span class="a t" style="left:79.60px;top:65px;font-size:12px;line-height:16px;color:#1e1e1e;letter-spacing:0.100px;">Dokumenty</span>
<svg class="a" style="left:55.900000000000006px;top:83.57000000000005px;" width="17" height="18" viewBox="0 0 17 18"><path d="M5.2 1.2h7.6l1.6 1.6v6H5.2z" fill="#f4f4f4" stroke="#9b9b9b" stroke-width=".8"/><path d="M3.6 2.6h7.6l1.4 1.4v6H3.6z" fill="#fdfdfd" stroke="#a5a5a5" stroke-width=".8"/><path d="M5.4 5h5M5.4 6.6h5" stroke="#b9b9b9" stroke-width=".7"/><path d="M0.5 4.4a.8.8 0 0 1 .8-.8h3l1.2 1.4h-4.2v11h-.8z" fill="#e9a820"/><path d="M2.2 7.4h14.3l-1.7 9.1H0.6z" fill="#fbc94a"/><path d="M2.2 7.4h14.3l-.5 2.6H1.8z" fill="#fdd977"/><path d="M0.6 16.5h14.2l-.2.9H0.8z" fill="#e8a51c"/></svg>
<span class="a t" style="left:79.60px;top:86px;font-size:12px;line-height:16px;color:#1e1e1e;letter-spacing:0.065px;">Dokumenty tekstowe</span>
<svg class="a" style="left:41.5px;top:110.64999999999998px;" width="9" height="6" viewBox="0 0 9 6"><path d="M0.700 0.700l3.800 3.900 3.800-3.900" fill="none" stroke="#1c1c1c" stroke-width="1.500"/></svg>
<svg class="a" style="left:55.900000000000006px;top:104.84999999999997px;" width="17" height="18" viewBox="0 0 17 18"><rect x="0.3" y="0.4" width="5.2" height="17.2" rx="1" fill="#2c6fb5"/><rect x="1.8" y="2" width="2.2" height="5.6" fill="#fff" opacity=".85"/><circle cx="2.9" cy="14.2" r="1.3" fill="#fff" opacity=".9"/><circle cx="2.9" cy="14.2" r=".5" fill="#2c6fb5"/><rect x="6.0" y="0.4" width="5.2" height="17.2" rx="1" fill="#f26b3a"/><rect x="7.5" y="2" width="2.2" height="5.6" fill="#fff" opacity=".85"/><circle cx="8.6" cy="14.2" r="1.3" fill="#fff" opacity=".9"/><circle cx="8.6" cy="14.2" r=".5" fill="#f26b3a"/><rect x="11.700000000000001" y="0.4" width="5.2" height="17.2" rx="1" fill="#f9b84a"/><rect x="13.200000000000001" y="2" width="2.2" height="5.6" fill="#fff" opacity=".85"/><circle cx="14.3" cy="14.2" r="1.3" fill="#fff" opacity=".9"/><circle cx="14.3" cy="14.2" r=".5" fill="#f9b84a"/></svg>
<span class="a t" style="left:79.60px;top:106px;font-size:12px;line-height:16px;color:#1e1e1e;letter-spacing:-0.015px;">Ewidencje księgowe</span>
<svg class="a" style="left:58.5px;top:131.32999999999998px;" width="9" height="6" viewBox="0 0 9 6"><path d="M0.700 0.700l3.800 3.900 3.800-3.900" fill="none" stroke="#1c1c1c" stroke-width="1.500"/></svg>
<svg class="a" style="left:73.1px;top:126.93px;" width="17" height="15" viewBox="0 0 17 15"><rect x="0.5" y="0.5" width="16.2" height="13.6" rx="1" fill="#fbfbfb" stroke="#a2a2a2" stroke-width=".9"/><path d="M3 3.4v10.4" stroke="#dcdcdc" stroke-width=".5"/><path d="M5.4 3.4v10.4" stroke="#dcdcdc" stroke-width=".5"/><path d="M7.8 3.4v10.4" stroke="#dcdcdc" stroke-width=".5"/><path d="M10.2 3.4v10.4" stroke="#dcdcdc" stroke-width=".5"/><path d="M12.6 3.4v10.4" stroke="#dcdcdc" stroke-width=".5"/><path d="M15 3.4v10.4" stroke="#dcdcdc" stroke-width=".5"/><path d="M0.8 5.6h15.6" stroke="#dcdcdc" stroke-width=".5"/><path d="M0.8 7.8h15.6" stroke="#dcdcdc" stroke-width=".5"/><path d="M0.8 10h15.6" stroke="#dcdcdc" stroke-width=".5"/><path d="M0.8 12.2h15.6" stroke="#dcdcdc" stroke-width=".5"/><path d="M0.2 1.2a1 1 0 0 1 1-1h14.8a1 1 0 0 1 1 1v1.7H0.2z" fill="#e9441d"/></svg>
<span class="a t" style="left:96.60px;top:127px;font-size:12px;line-height:16px;color:#1e1e1e;letter-spacing:-0.453px;">Lata</span>
<svg class="a" style="left:77.4px;top:150.61px;" width="6" height="9" viewBox="0 0 6 9"><path d="M0.700 0.600l3.900 3.900-3.900 3.900" fill="none" stroke="#8a8a8a" stroke-width="1.600"/></svg>
<span class="a t" style="left:93.80px;top:148px;font-size:12px;line-height:16px;color:#1e1e1e;letter-spacing:-0.234px;">2018</span>
<svg class="a" style="left:77.4px;top:171.29000000000002px;" width="6" height="9" viewBox="0 0 6 9"><path d="M0.700 0.600l3.900 3.900-3.900 3.900" fill="none" stroke="#8a8a8a" stroke-width="1.600"/></svg>
<span class="a t" style="left:93.80px;top:168px;font-size:12px;line-height:16px;color:#1e1e1e;letter-spacing:-0.234px;">2019</span>
<svg class="a" style="left:77.4px;top:191.97000000000003px;" width="6" height="9" viewBox="0 0 6 9"><path d="M0.700 0.600l3.900 3.900-3.900 3.900" fill="none" stroke="#8a8a8a" stroke-width="1.600"/></svg>
<span class="a t" style="left:93.80px;top:189px;font-size:12px;line-height:16px;color:#1e1e1e;letter-spacing:-0.234px;">2020</span>
<svg class="a" style="left:77.4px;top:212.65000000000003px;" width="6" height="9" viewBox="0 0 6 9"><path d="M0.700 0.600l3.900 3.900-3.900 3.900" fill="none" stroke="#8a8a8a" stroke-width="1.600"/></svg>
<span class="a t" style="left:93.80px;top:210px;font-size:12px;line-height:16px;color:#1e1e1e;letter-spacing:-0.234px;">2021</span>
<svg class="a" style="left:75.5px;top:234.73000000000002px;" width="9" height="6" viewBox="0 0 9 6"><path d="M0.700 0.700l3.800 3.900 3.800-3.900" fill="none" stroke="#1c1c1c" stroke-width="1.500"/></svg>
<span class="a t" style="left:93.80px;top:230px;font-size:12px;line-height:16px;color:#1e1e1e;letter-spacing:-0.234px;">2022</span>
<svg class="a" style="left:94.4px;top:254.01px;" width="6" height="9" viewBox="0 0 6 9"><path d="M0.700 0.600l3.900 3.900-3.900 3.900" fill="none" stroke="#8a8a8a" stroke-width="1.600"/></svg>
<span class="a t" style="left:110.80px;top:251px;font-size:12px;line-height:16px;color:#1e1e1e;letter-spacing:-0.448px;">Styczeń</span>
<svg class="a" style="left:94.4px;top:274.69px;" width="6" height="9" viewBox="0 0 6 9"><path d="M0.700 0.600l3.900 3.900-3.900 3.900" fill="none" stroke="#8a8a8a" stroke-width="1.600"/></svg>
<span class="a t" style="left:110.80px;top:272px;font-size:12px;line-height:16px;color:#1e1e1e;letter-spacing:-0.229px;">Luty</span>
<svg class="a" style="left:94.4px;top:295.37px;" width="6" height="9" viewBox="0 0 6 9"><path d="M0.700 0.600l3.900 3.900-3.900 3.900" fill="none" stroke="#8a8a8a" stroke-width="1.600"/></svg>
<span class="a t" style="left:110.80px;top:292px;font-size:12px;line-height:16px;color:#1e1e1e;letter-spacing:0.191px;">Marzec</span>
<svg class="a" style="left:94.4px;top:316.05000000000007px;" width="6" height="9" viewBox="0 0 6 9"><path d="M0.700 0.600l3.900 3.900-3.900 3.900" fill="none" stroke="#8a8a8a" stroke-width="1.600"/></svg>
<span class="a t" style="left:110.80px;top:313px;font-size:12px;line-height:16px;color:#1e1e1e;letter-spacing:-0.147px;">Kwiecień</span>
<svg class="a" style="left:94.4px;top:336.73px;" width="6" height="9" viewBox="0 0 6 9"><path d="M0.700 0.600l3.900 3.900-3.900 3.900" fill="none" stroke="#8a8a8a" stroke-width="1.600"/></svg>
<span class="a t" style="left:110.80px;top:334px;font-size:12px;line-height:16px;color:#1e1e1e;letter-spacing:0.578px;">Maj</span>
<svg class="a" style="left:94.4px;top:357.40999999999997px;" width="6" height="9" viewBox="0 0 6 9"><path d="M0.700 0.600l3.900 3.900-3.900 3.900" fill="none" stroke="#8a8a8a" stroke-width="1.600"/></svg>
<span class="a t" style="left:110.80px;top:354px;font-size:12px;line-height:16px;color:#1e1e1e;letter-spacing:-0.192px;">Czerwiec</span>
<svg class="a" style="left:92.5px;top:379.49px;" width="9" height="6" viewBox="0 0 9 6"><path d="M0.700 0.700l3.800 3.900 3.800-3.900" fill="none" stroke="#1c1c1c" stroke-width="1.500"/></svg>
<span class="a t" style="left:110.80px;top:375px;font-size:12px;line-height:16px;color:#1e1e1e;letter-spacing:0.028px;">Lipiec</span>
<div class="a" style="left:143.4px;top:393px;width:123.2px;height:19.6px;background:#d9d9d9;"></div>
<svg class="a" style="left:123.9px;top:393.7700000000001px;" width="17" height="18" viewBox="0 0 17 18"><path d="M5.2 1.2h7.6l1.6 1.6v6H5.2z" fill="#f4f4f4" stroke="#9b9b9b" stroke-width=".8"/><path d="M3.6 2.6h7.6l1.4 1.4v6H3.6z" fill="#fdfdfd" stroke="#a5a5a5" stroke-width=".8"/><path d="M5.4 5h5M5.4 6.6h5" stroke="#b9b9b9" stroke-width=".7"/><path d="M0.5 4.4a.8.8 0 0 1 .8-.8h3l1.2 1.4h-4.2v11h-.8z" fill="#e9a820"/><path d="M2.2 7.4h14.3l-1.7 9.1H0.6z" fill="#fbc94a"/><path d="M2.2 7.4h14.3l-.5 2.6H1.8z" fill="#fdd977"/><path d="M0.6 16.5h14.2l-.2.9H0.8z" fill="#e8a51c"/></svg>
<span class="a t" style="left:147.60px;top:396px;font-size:12px;line-height:16px;color:#1e1e1e;letter-spacing:0.055px;">Dokumenty księgowe</span>
<svg class="a" style="left:60.400000000000006px;top:419.45000000000005px;" width="6" height="9" viewBox="0 0 6 9"><path d="M0.700 0.600l3.900 3.900-3.900 3.900" fill="none" stroke="#8a8a8a" stroke-width="1.600"/></svg>
<svg class="a" style="left:72.9px;top:414.45000000000005px;" width="17" height="18" viewBox="0 0 17 18"><path d="M5.2 1.2h7.6l1.6 1.6v6H5.2z" fill="#f4f4f4" stroke="#9b9b9b" stroke-width=".8"/><path d="M3.6 2.6h7.6l1.4 1.4v6H3.6z" fill="#fdfdfd" stroke="#a5a5a5" stroke-width=".8"/><path d="M5.4 5h5M5.4 6.6h5" stroke="#b9b9b9" stroke-width=".7"/><path d="M0.5 4.4a.8.8 0 0 1 .8-.8h3l1.2 1.4h-4.2v11h-.8z" fill="#e9a820"/><path d="M2.2 7.4h14.3l-1.7 9.1H0.6z" fill="#fbc94a"/><path d="M2.2 7.4h14.3l-.5 2.6H1.8z" fill="#fdd977"/><path d="M0.6 16.5h14.2l-.2.9H0.8z" fill="#e8a51c"/></svg>
<span class="a t" style="left:96.60px;top:416px;font-size:12px;line-height:16px;color:#1e1e1e;letter-spacing:-0.781px;">VAT</span>
<svg class="a" style="left:72.9px;top:435.13px;" width="17" height="18" viewBox="0 0 17 18"><path d="M5.2 1.2h7.6l1.6 1.6v6H5.2z" fill="#f4f4f4" stroke="#9b9b9b" stroke-width=".8"/><path d="M3.6 2.6h7.6l1.4 1.4v6H3.6z" fill="#fdfdfd" stroke="#a5a5a5" stroke-width=".8"/><path d="M5.4 5h5M5.4 6.6h5" stroke="#b9b9b9" stroke-width=".7"/><path d="M0.5 4.4a.8.8 0 0 1 .8-.8h3l1.2 1.4h-4.2v11h-.8z" fill="#e9a820"/><path d="M2.2 7.4h14.3l-1.7 9.1H0.6z" fill="#fbc94a"/><path d="M2.2 7.4h14.3l-.5 2.6H1.8z" fill="#fdd977"/><path d="M0.6 16.5h14.2l-.2.9H0.8z" fill="#e8a51c"/></svg>
<span class="a t" style="left:96.60px;top:437px;font-size:12px;line-height:16px;color:#1e1e1e;letter-spacing:-0.061px;">Plany kont</span>
<svg class="a" style="left:72.9px;top:455.81000000000006px;" width="17" height="18" viewBox="0 0 17 18"><path d="M5.2 1.2h7.6l1.6 1.6v6H5.2z" fill="#f4f4f4" stroke="#9b9b9b" stroke-width=".8"/><path d="M3.6 2.6h7.6l1.4 1.4v6H3.6z" fill="#fdfdfd" stroke="#a5a5a5" stroke-width=".8"/><path d="M5.4 5h5M5.4 6.6h5" stroke="#b9b9b9" stroke-width=".7"/><path d="M0.5 4.4a.8.8 0 0 1 .8-.8h3l1.2 1.4h-4.2v11h-.8z" fill="#e9a820"/><path d="M2.2 7.4h14.3l-1.7 9.1H0.6z" fill="#fbc94a"/><path d="M2.2 7.4h14.3l-.5 2.6H1.8z" fill="#fdd977"/><path d="M0.6 16.5h14.2l-.2.9H0.8z" fill="#e8a51c"/></svg>
<span class="a t" style="left:96.60px;top:458px;font-size:12px;line-height:16px;color:#1e1e1e;letter-spacing:-0.023px;">Dzienniki</span>
<svg class="a" style="left:72.9px;top:476.49px;" width="17" height="18" viewBox="0 0 17 18"><path d="M5.2 1.2h7.6l1.6 1.6v6H5.2z" fill="#f4f4f4" stroke="#9b9b9b" stroke-width=".8"/><path d="M3.6 2.6h7.6l1.4 1.4v6H3.6z" fill="#fdfdfd" stroke="#a5a5a5" stroke-width=".8"/><path d="M5.4 5h5M5.4 6.6h5" stroke="#b9b9b9" stroke-width=".7"/><path d="M0.5 4.4a.8.8 0 0 1 .8-.8h3l1.2 1.4h-4.2v11h-.8z" fill="#e9a820"/><path d="M2.2 7.4h14.3l-1.7 9.1H0.6z" fill="#fbc94a"/><path d="M2.2 7.4h14.3l-.5 2.6H1.8z" fill="#fdd977"/><path d="M0.6 16.5h14.2l-.2.9H0.8z" fill="#e8a51c"/></svg>
<span class="a t" style="left:96.60px;top:479px;font-size:12px;line-height:16px;color:#1e1e1e;letter-spacing:-0.020px;">Ewidencja wyposażenia</span>
<svg class="a" style="left:56.8px;top:500.4699999999999px;" width="16.5" height="12" viewBox="0 0 16.5 12"><rect x="0.5" y="0.5" width="15.4" height="11" fill="#fcfcfc" stroke="#9c9c9c" stroke-width=".9"/><path d="M0.5 11h15.4" stroke="#7c7c7c" stroke-width="1"/><path d="M3.4 6h5.6M3.4 7.8h3.8" stroke="#bdbdbd" stroke-width=".8"/><rect x="12.4" y="2.2" width="1.7" height="1.7" fill="#e02424"/></svg>
<span class="a t" style="left:79.60px;top:499px;font-size:12px;line-height:16px;color:#1e1e1e;letter-spacing:0.293px;">Wiadomości</span>
<svg class="a" style="left:43.400000000000006px;top:522.85px;" width="6" height="9" viewBox="0 0 6 9"><path d="M0.700 0.600l3.900 3.900-3.900 3.900" fill="none" stroke="#8a8a8a" stroke-width="1.600"/></svg>
<svg class="a" style="left:56.5px;top:519.25px;" width="17" height="15" viewBox="0 0 17 15"><path d="M6 4.2l8.2-3.6 2.6 1.6v7.4l-8 3.8z" fill="#d9d9d9"/><path d="M6 4.2l8.2-3.6 2.6 1.6-8 3.6z" fill="#efefef"/><path d="M8.8 5.8l8-3.6v7.4l-8 3.8z" fill="#c4c4c4"/><path d="M0.6 7.2l2-2.4 3.4-.6 2.8 1.6v6.6l-1.6.8-6.6-2.6z" fill="#e23b2e"/><path d="M1.4 7.4l1.6-1.7 2.8-.4 2 1.2v2l-6.4-.2z" fill="#7c2a24"/><circle cx="3" cy="11.6" r="1.5" fill="#333"/><circle cx="7.2" cy="13" r="1.5" fill="#333"/><circle cx="14.6" cy="10.4" r="1.4" fill="#333"/></svg>
<span class="a t" style="left:79.60px;top:520px;font-size:12px;line-height:16px;color:#1e1e1e;letter-spacing:0.178px;">Środki trwałe</span>
<svg class="a" style="left:43.400000000000006px;top:543.53px;" width="6" height="9" viewBox="0 0 6 9"><path d="M0.700 0.600l3.900 3.900-3.900 3.900" fill="none" stroke="#8a8a8a" stroke-width="1.600"/></svg>
<svg class="a" style="left:56.5px;top:540.43px;" width="17" height="16" viewBox="0 0 17 16"><rect x="10.4" y="0.2" width="3.4" height="4" rx="1" fill="#f2f2f2" stroke="#aaa" stroke-width=".5"/><rect x="0.4" y="2.6" width="16" height="9.6" fill="#4e5357"/><rect x="1.6" y="3.6" width="6.2" height="2" fill="#8fd0f0"/><rect x="1.8" y="6.6" width="1.5" height="1.5" fill="#e8e8e8"/><rect x="3.8" y="6.6" width="1.5" height="1.5" fill="#e8e8e8"/><rect x="9.6" y="6.6" width="1.5" height="1.5" fill="#e8e8e8"/><rect x="11.6" y="6.6" width="1.5" height="1.5" fill="#e8e8e8"/><rect x="13.6" y="6.6" width="1.5" height="1.5" fill="#e8e8e8"/><rect x="1.8" y="8.8" width="1.5" height="1.5" fill="#e8e8e8"/><rect x="3.8" y="8.8" width="1.5" height="1.5" fill="#e8e8e8"/><rect x="9.6" y="8.8" width="1.5" height="1.5" fill="#e8e8e8"/><rect x="11.6" y="8.8" width="1.5" height="1.5" fill="#e8e8e8"/><rect x="13.6" y="8.8" width="1.5" height="1.5" fill="#e8e8e8"/><rect x="6" y="6.6" width="1.4" height="3.8" fill="#5cc03c"/><rect x="7.6" y="6.6" width="1.4" height="3.8" fill="#e8502e"/><rect x="0.2" y="12.2" width="16.4" height="3" fill="#6b7074"/><rect x="0.2" y="15" width="16.4" height=".8" fill="#3c3f42"/></svg>
<span class="a t" style="left:79.60px;top:541px;font-size:12px;line-height:16px;color:#1e1e1e;letter-spacing:-0.029px;">Sprzedaż</span>
<svg class="a" style="left:56.5px;top:562.21px;" width="17" height="14" viewBox="0 0 17 14"><path d="M0.2 7.4l7-6.8 5.4 2.2-5.8 8.6z" fill="#4fae55"/><path d="M3.2 6.2l8.6-3.8 4.8 4.2-7.8 5.6z" fill="#65bf6a"/><rect x="6.6" y="6.2" width="10.2" height="7.6" fill="#57b45d"/><rect x="7.6" y="7.2" width="8.2" height="5.6" fill="none" stroke="#a7dca9" stroke-width=".7"/><circle cx="11.7" cy="10" r="1.6" fill="#a7dca9"/></svg>
<span class="a t" style="left:79.60px;top:561px;font-size:12px;line-height:16px;color:#1e1e1e;letter-spacing:-0.088px;">Płatności</span>
<svg class="a" style="left:43.400000000000006px;top:584.89px;" width="6" height="9" viewBox="0 0 6 9"><path d="M0.700 0.600l3.900 3.900-3.900 3.900" fill="none" stroke="#8a8a8a" stroke-width="1.600"/></svg>
<svg class="a" style="left:56.5px;top:580.0899999999999px;" width="17" height="18" viewBox="0 0 17 18"><path d="M1 0.4v16.8M15.6 0.4v16.8" stroke="#b5764a" stroke-width="1.3"/><path d="M1 8h14.6M1 14.8h14.6" stroke="#b5764a" stroke-width="1.2"/><rect x="6" y="2.2" width="5" height="5.2" fill="#f5a742"/><rect x="7.8" y="2.2" width="1.4" height="2" fill="#fbd08a"/><rect x="2.6" y="9.4" width="4.8" height="4.8" fill="#f5a742"/><rect x="4.3" y="9.4" width="1.4" height="1.9" fill="#fbd08a"/><rect x="9" y="9.4" width="4.8" height="4.8" fill="#f5a742"/><rect x="10.7" y="9.4" width="1.4" height="1.9" fill="#fbd08a"/></svg>
<span class="a t" style="left:79.60px;top:582px;font-size:12px;line-height:16px;color:#1e1e1e;letter-spacing:0.216px;">Magazyn</span>
<svg class="a" style="left:56.5px;top:601.97px;" width="17" height="12" viewBox="0 0 17 12"><circle cx="4" cy="4" r="2.6" fill="#f7c9a0"/><circle cx="13" cy="4" r="2.6" fill="#f7c9a0"/><circle cx="8.5" cy="3.4" r="3" fill="#fbd9b8"/><path d="M0 12c0-4 3-5.4 4.4-5.4S8 8 8 12z" fill="#f08a4b"/><path d="M9 12c0-4 2.600-5.400 4-5.400S17 8 17 12z" fill="#f08a4b"/><path d="M3.800 12c0-3.600 2.400-5.200 4.700-5.200s4.700 1.600 4.700 5.200z" fill="#3b8fd9"/></svg>
<span class="a t" style="left:79.60px;top:603px;font-size:12px;line-height:16px;color:#1e1e1e;letter-spacing:0.195px;">Kontrahenci</span>
</div>
<div class="a" style="left:343px;top:211px;width:906px;height:631px;background:#fff;border:1px solid #a6a6a6;"></div>
<div class="a" style="left:343px;top:210px;width:906px;height:1px;background:#d2d2d2;"></div>
<div class="a" style="left:778px;top:212px;width:1px;height:20px;background:#e3e3e3;"></div>
<div class="a" style="left:1225px;top:212px;width:1px;height:20px;background:#e3e3e3;"></div>
<span class="a t" style="left:532.25px;top:215px;font-size:12px;line-height:16px;color:#1e1e1e;letter-spacing:0.114px;">Dokument</span>
<span class="a t" style="left:990.50px;top:215px;font-size:12px;line-height:16px;color:#1e1e1e;letter-spacing:-0.781px;">VAT</span>
<div class="a" style="left:344px;top:232px;width:882px;height:582.5px;background:#cce8ff;"></div>
<div class="a" style="left:778px;top:232px;width:1px;height:582px;background:repeating-linear-gradient(180deg,#3a3ae0 0 1px,transparent 1px 2px);"></div>
<div class="a" style="left:1225px;top:232px;width:1px;height:582px;background:repeating-linear-gradient(180deg,#3a3ae0 0 1px,transparent 1px 2px);"></div>
<div class="a" style="left:344px;top:377px;width:882px;height:1px;background:repeating-linear-gradient(90deg,#3a3ae0 0 1px,transparent 1px 2px);"></div>
<div class="a" style="left:344px;top:523px;width:882px;height:1px;background:repeating-linear-gradient(90deg,#3a3ae0 0 1px,transparent 1px 2px);"></div>
<div class="a" style="left:344px;top:669px;width:882px;height:1px;background:repeating-linear-gradient(90deg,#3a3ae0 0 1px,transparent 1px 2px);"></div>
<div class="a" style="left:344px;top:814px;width:882px;height:1px;background:repeating-linear-gradient(90deg,#3a3ae0 0 1px,transparent 1px 2px);"></div>
<div class="a" style="left:349px;top:245px;width:41px;height:22px;background:#fdf9ef;border:1px solid #c6c6c6;"></div>
<span class="a t" style="left:365.46px;top:249px;font-size:12px;line-height:16px;color:#f20d0d;font-weight:700;">1</span>
<div class="a" style="left:392px;top:245px;width:70px;height:22px;background:#fdf9ef;border:1px solid #c6c6c6;"></div>
<span class="a t" style="left:396.30px;top:249px;font-size:12px;line-height:16px;color:#0505f5;font-weight:700;letter-spacing:-0.066px;">2022-07-01</span>
<div class="a" style="left:465px;top:245px;width:309px;height:22px;background:#fdf9ef;border:1px solid #c6c6c6;"></div>
<span class="a t" style="left:470.50px;top:249px;font-size:12px;line-height:16px;color:#111111;font-weight:700;letter-spacing:-0.068px;">3333</span>
<div class="a" style="left:349px;top:269px;width:316px;height:22px;background:#fdf9ef;border:1px solid #c6c6c6;"></div>
<div class="a" style="left:667px;top:269px;width:107px;height:22px;background:#fdf9ef;border:1px solid #c6c6c6;"></div>
<div class="a" style="left:349px;top:292px;width:425px;height:22px;background:#fdf9ef;border:1px solid #c6c6c6;"></div>
<div class="a" style="left:349px;top:318px;width:425px;height:21px;background:#fdf9ef;border:1px solid #c6c6c6;"></div>
<div class="a" style="left:349px;top:343px;width:268px;height:22px;background:#fdf9ef;border:1px solid #c6c6c6;"></div>
<span class="a t" style="left:351.30px;top:347px;font-size:12px;line-height:16px;color:#f20d0d;font-weight:700;letter-spacing:-0.273px;">Przychody</span>
<div class="a" style="left:620px;top:343px;width:47px;height:22px;background:#fdf9ef;border:1px solid #c6c6c6;"></div>
<span class="a t" style="left:638.60px;top:347px;font-size:12px;line-height:16px;color:#111111;font-weight:700;letter-spacing:-0.286px;">3,0%</span>
<div class="a" style="left:670px;top:343px;width:104px;height:22px;background:#fdf9ef;border:1px solid #c6c6c6;"></div>
<span class="a t" style="left:707.50px;top:347px;font-size:12px;line-height:16px;color:#111111;font-weight:700;letter-spacing:0.049px;">100 000,00</span>
<div class="a" style="left:784px;top:245px;width:70px;height:22px;background:#fdf9ef;border:1px solid #c6c6c6;"></div>
<span class="a t" style="left:788.00px;top:249px;font-size:12px;line-height:16px;color:#0505f5;font-weight:700;letter-spacing:-0.066px;">2022-07-01</span>
<div class="a" style="left:857px;top:245px;width:363px;height:22px;background:#fdf9ef;border:1px solid #c6c6c6;"></div>
<span class="a t" style="left:862.00px;top:249px;font-size:12px;line-height:16px;color:#f20d0d;font-weight:700;">Przychody, VAT należny</span>
<div class="a" style="left:784px;top:269px;width:436px;height:21px;background:#fdf9ef;border:1px solid #c6c6c6;"></div>
<span class="a t" style="left:789.80px;top:272px;font-size:12px;line-height:16px;color:#f20d0d;font-weight:700;letter-spacing:0.080px;">Dostawa krajowa</span>
<div class="a" style="left:784px;top:292px;width:123px;height:22px;background:#fdf9ef;border:1px solid #c6c6c6;"></div>
<span class="a t" style="left:842.80px;top:296px;font-size:12px;line-height:16px;color:#111111;letter-spacing:-0.174px;">100 000,00</span>
<div class="a" style="left:968px;top:292px;width:123px;height:22px;background:#fdf9ef;border:1px solid #c6c6c6;"></div>
<span class="a t" style="left:1033.40px;top:296px;font-size:12px;line-height:16px;color:#111111;letter-spacing:-0.111px;">23 000,00</span>
<div class="a" style="left:1094px;top:292px;width:126px;height:22px;background:#fdf9ef;border:1px solid #c6c6c6;"></div>
<span class="a t" style="left:1156.00px;top:296px;font-size:12px;line-height:16px;color:#111111;letter-spacing:-0.174px;">123 000,00</span>
<div class="a" style="left:909px;top:292px;width:57px;height:22px;background:#fdf9ef;border:1px solid #c6c6c6;"></div>
<span class="a t" style="left:931.25px;top:296px;font-size:12px;line-height:16px;color:#111111;font-weight:700;letter-spacing:-0.359px;">23</span>
<div class="a" style="left:784px;top:316px;width:123px;height:21px;background:#fdf9ef;border:1px solid #c6c6c6;"></div>
<span class="a t" style="left:841.30px;top:319px;font-size:12px;line-height:16px;color:#111111;font-weight:700;letter-spacing:-0.007px;">100 000,00</span>
<div class="a" style="left:968px;top:316px;width:123px;height:21px;background:#fdf9ef;border:1px solid #c6c6c6;"></div>
<span class="a t" style="left:1032.40px;top:319px;font-size:12px;line-height:16px;color:#111111;font-weight:700;letter-spacing:0.014px;">23 000,00</span>
<div class="a" style="left:1094px;top:316px;width:126px;height:21px;background:#fdf9ef;border:1px solid #c6c6c6;"></div>
<span class="a t" style="left:1154.50px;top:319px;font-size:12px;line-height:16px;color:#111111;font-weight:700;letter-spacing:-0.007px;">123 000,00</span>
<div class="a" style="left:349px;top:391px;width:41px;height:22px;background:#fdf9ef;border:1px solid #c6c6c6;"></div>
<span class="a t" style="left:365.46px;top:395px;font-size:12px;line-height:16px;color:#f20d0d;font-weight:700;">2</span>
<div class="a" style="left:392px;top:391px;width:70px;height:22px;background:#fdf9ef;border:1px solid #c6c6c6;"></div>
<span class="a t" style="left:396.30px;top:395px;font-size:12px;line-height:16px;color:#0505f5;font-weight:700;letter-spacing:-0.066px;">2022-07-01</span>
<div class="a" style="left:465px;top:391px;width:309px;height:22px;background:#fdf9ef;border:1px solid #c6c6c6;"></div>
<span class="a t" style="left:470.50px;top:395px;font-size:12px;line-height:16px;color:#111111;font-weight:700;letter-spacing:0.362px;">towary</span>
<div class="a" style="left:349px;top:415px;width:316px;height:21px;background:#fdf9ef;border:1px solid #c6c6c6;"></div>
<span class="a t" style="left:354.50px;top:418px;font-size:12px;line-height:16px;color:#111111;letter-spacing:-0.605px;">FEDEX EXPRESS POLSKA SPÓŁKA Z OGRANICZONĄ ODP</span>
<div class="a" style="left:667px;top:415px;width:107px;height:21px;background:#fdf9ef;border:1px solid #c6c6c6;"></div>
<span class="a t" style="left:687.75px;top:418px;font-size:12px;line-height:16px;color:#111111;letter-spacing:-0.194px;">5261005306</span>
<div class="a" style="left:349px;top:438px;width:425px;height:22px;background:#fdf9ef;border:1px solid #c6c6c6;"></div>
<span class="a t" style="left:354.50px;top:442px;font-size:12px;line-height:16px;color:#111111;letter-spacing:-0.126px;">ul. Krucza 16/22, 00-526 Warszawa, POLSKA</span>
<div class="a" style="left:349px;top:464px;width:425px;height:21px;background:#fdf9ef;border:1px solid #c6c6c6;"></div>
<div class="a" style="left:349px;top:489px;width:268px;height:22px;background:#fdf9ef;border:1px solid #c6c6c6;"></div>
<span class="a t" style="left:351.30px;top:493px;font-size:12px;line-height:16px;color:#0505f5;font-weight:700;letter-spacing:0.097px;">Zakupy</span>
<div class="a" style="left:670px;top:489px;width:104px;height:22px;background:#fdf9ef;border:1px solid #c6c6c6;"></div>
<span class="a t" style="left:721.70px;top:493px;font-size:12px;line-height:16px;color:#111111;font-weight:700;letter-spacing:-0.060px;">1 000,00</span>
<div class="a" style="left:784px;top:391px;width:70px;height:22px;background:#fdf9ef;border:1px solid #c6c6c6;"></div>
<span class="a t" style="left:788.00px;top:395px;font-size:12px;line-height:16px;color:#0505f5;font-weight:700;letter-spacing:-0.066px;">2022-07-01</span>
<div class="a" style="left:857px;top:391px;width:363px;height:22px;background:#fdf9ef;border:1px solid #c6c6c6;"></div>
<span class="a t" style="left:862.00px;top:395px;font-size:12px;line-height:16px;color:#0505f5;font-weight:700;letter-spacing:0.109px;">Zakupy,wydatki,VAT naliczony</span>
<div class="a" style="left:784px;top:415px;width:436px;height:21px;background:#fdf9ef;border:1px solid #c6c6c6;"></div>
<span class="a t" style="left:789.80px;top:418px;font-size:12px;line-height:16px;color:#0505f5;font-weight:700;letter-spacing:0.019px;">Nabycia pozostałe</span>
<div class="a" style="left:784px;top:438px;width:123px;height:22px;background:#fdf9ef;border:1px solid #c6c6c6;"></div>
<span class="a t" style="left:856.30px;top:442px;font-size:12px;line-height:16px;color:#111111;letter-spacing:-0.246px;">1 000,00</span>
<div class="a" style="left:968px;top:438px;width:123px;height:22px;background:#fdf9ef;border:1px solid #c6c6c6;"></div>
<span class="a t" style="left:1050.40px;top:442px;font-size:12px;line-height:16px;color:#111111;letter-spacing:-0.241px;">230,00</span>
<div class="a" style="left:1094px;top:438px;width:126px;height:22px;background:#fdf9ef;border:1px solid #c6c6c6;"></div>
<span class="a t" style="left:1169.50px;top:442px;font-size:12px;line-height:16px;color:#111111;letter-spacing:-0.246px;">1 230,00</span>
<div class="a" style="left:909px;top:438px;width:57px;height:22px;background:#fdf9ef;border:1px solid #c6c6c6;"></div>
<span class="a t" style="left:931.25px;top:442px;font-size:12px;line-height:16px;color:#111111;font-weight:700;letter-spacing:-0.359px;">23</span>
<div class="a" style="left:784px;top:462px;width:123px;height:21px;background:#fdf9ef;border:1px solid #c6c6c6;"></div>
<span class="a t" style="left:855.00px;top:465px;font-size:12px;line-height:16px;color:#111111;font-weight:700;letter-spacing:-0.060px;">1 000,00</span>
<div class="a" style="left:968px;top:462px;width:123px;height:21px;background:#fdf9ef;border:1px solid #c6c6c6;"></div>
<span class="a t" style="left:1049.40px;top:465px;font-size:12px;line-height:16px;color:#111111;font-weight:700;letter-spacing:-0.041px;">230,00</span>
<div class="a" style="left:1094px;top:462px;width:126px;height:21px;background:#fdf9ef;border:1px solid #c6c6c6;"></div>
<span class="a t" style="left:1168.20px;top:465px;font-size:12px;line-height:16px;color:#111111;font-weight:700;letter-spacing:-0.060px;">1 230,00</span>
<div class="a" style="left:349px;top:537px;width:41px;height:22px;background:#fdf9ef;border:1px solid #c6c6c6;"></div>
<span class="a t" style="left:365.46px;top:541px;font-size:12px;line-height:16px;color:#f20d0d;font-weight:700;">3</span>
<div class="a" style="left:392px;top:537px;width:70px;height:22px;background:#fdf9ef;border:1px solid #c6c6c6;"></div>
<span class="a t" style="left:396.30px;top:541px;font-size:12px;line-height:16px;color:#0505f5;font-weight:700;letter-spacing:-0.066px;">2022-07-01</span>
<div class="a" style="left:465px;top:537px;width:309px;height:22px;background:#fdf9ef;border:1px solid #c6c6c6;"></div>
<span class="a t" style="left:470.50px;top:541px;font-size:12px;line-height:16px;color:#111111;font-weight:700;letter-spacing:-0.255px;">1koszty</span>
<div class="a" style="left:349px;top:561px;width:316px;height:21px;background:#fdf9ef;border:1px solid #c6c6c6;"></div>
<span class="a t" style="left:354.50px;top:564px;font-size:12px;line-height:16px;color:#111111;letter-spacing:-0.605px;">FEDEX EXPRESS POLSKA SPÓŁKA Z OGRANICZONĄ ODP</span>
<div class="a" style="left:667px;top:561px;width:107px;height:21px;background:#fdf9ef;border:1px solid #c6c6c6;"></div>
<span class="a t" style="left:687.75px;top:564px;font-size:12px;line-height:16px;color:#111111;letter-spacing:-0.194px;">5261005306</span>
<div class="a" style="left:349px;top:584px;width:425px;height:22px;background:#fdf9ef;border:1px solid #c6c6c6;"></div>
<span class="a t" style="left:354.50px;top:588px;font-size:12px;line-height:16px;color:#111111;letter-spacing:-0.126px;">ul. Krucza 16/22, 00-526 Warszawa, POLSKA</span>
<div class="a" style="left:349px;top:610px;width:425px;height:21px;background:#fdf9ef;border:1px solid #c6c6c6;"></div>
<div class="a" style="left:349px;top:635px;width:268px;height:22px;background:#fdf9ef;border:1px solid #c6c6c6;"></div>
<span class="a t" style="left:351.30px;top:639px;font-size:12px;line-height:16px;color:#0505f5;font-weight:700;letter-spacing:0.099px;">Wydatek (koszty)</span>
<div class="a" style="left:670px;top:635px;width:104px;height:22px;background:#fdf9ef;border:1px solid #c6c6c6;"></div>
<span class="a t" style="left:721.70px;top:639px;font-size:12px;line-height:16px;color:#111111;font-weight:700;letter-spacing:-0.060px;">1 000,00</span>
<div class="a" style="left:784px;top:537px;width:70px;height:22px;background:#fdf9ef;border:1px solid #c6c6c6;"></div>
<span class="a t" style="left:788.00px;top:541px;font-size:12px;line-height:16px;color:#0505f5;font-weight:700;letter-spacing:-0.066px;">2022-07-01</span>
<div class="a" style="left:857px;top:537px;width:363px;height:22px;background:#fdf9ef;border:1px solid #c6c6c6;"></div>
<span class="a t" style="left:862.00px;top:541px;font-size:12px;line-height:16px;color:#0505f5;font-weight:700;letter-spacing:0.099px;">Wydatek (koszty)</span>
<div class="a" style="left:784px;top:561px;width:436px;height:21px;background:#fdf9ef;border:1px solid #c6c6c6;"></div>
<span class="a t" style="left:789.80px;top:564px;font-size:12px;line-height:16px;color:#0505f5;font-weight:700;letter-spacing:0.019px;">Nabycia pozostałe</span>
<div class="a" style="left:784px;top:584px;width:123px;height:22px;background:#fdf9ef;border:1px solid #c6c6c6;"></div>
<span class="a t" style="left:856.30px;top:588px;font-size:12px;line-height:16px;color:#111111;letter-spacing:-0.246px;">1 000,00</span>
<div class="a" style="left:968px;top:584px;width:123px;height:22px;background:#fdf9ef;border:1px solid #c6c6c6;"></div>
<span class="a t" style="left:1050.40px;top:588px;font-size:12px;line-height:16px;color:#111111;letter-spacing:-0.241px;">230,00</span>
<div class="a" style="left:1094px;top:584px;width:126px;height:22px;background:#fdf9ef;border:1px solid #c6c6c6;"></div>
<span class="a t" style="left:1169.50px;top:588px;font-size:12px;line-height:16px;color:#111111;letter-spacing:-0.246px;">1 230,00</span>
<div class="a" style="left:909px;top:584px;width:57px;height:22px;background:#fdf9ef;border:1px solid #c6c6c6;"></div>
<span class="a t" style="left:931.25px;top:588px;font-size:12px;line-height:16px;color:#111111;font-weight:700;letter-spacing:-0.359px;">23</span>
<div class="a" style="left:784px;top:607px;width:123px;height:22px;background:#fdf9ef;border:1px solid #c6c6c6;"></div>
<span class="a t" style="left:855.00px;top:611px;font-size:12px;line-height:16px;color:#111111;font-weight:700;letter-spacing:-0.060px;">1 000,00</span>
<div class="a" style="left:968px;top:607px;width:123px;height:22px;background:#fdf9ef;border:1px solid #c6c6c6;"></div>
<span class="a t" style="left:1049.40px;top:611px;font-size:12px;line-height:16px;color:#111111;font-weight:700;letter-spacing:-0.041px;">230,00</span>
<div class="a" style="left:1094px;top:607px;width:126px;height:22px;background:#fdf9ef;border:1px solid #c6c6c6;"></div>
<span class="a t" style="left:1168.20px;top:611px;font-size:12px;line-height:16px;color:#111111;font-weight:700;letter-spacing:-0.060px;">1 230,00</span>
<div class="a" style="left:349px;top:683px;width:41px;height:22px;background:#fdf9ef;border:1px solid #c6c6c6;"></div>
<span class="a t" style="left:365.46px;top:686px;font-size:12px;line-height:16px;color:#f20d0d;font-weight:700;">4</span>
<div class="a" style="left:392px;top:683px;width:70px;height:22px;background:#fdf9ef;border:1px solid #c6c6c6;"></div>
<span class="a t" style="left:396.30px;top:686px;font-size:12px;line-height:16px;color:#0505f5;font-weight:700;letter-spacing:-0.066px;">2022-07-01</span>
<div class="a" style="left:465px;top:683px;width:309px;height:22px;background:#fdf9ef;border:1px solid #c6c6c6;"></div>
<span class="a t" style="left:470.50px;top:686px;font-size:12px;line-height:16px;color:#111111;font-weight:700;letter-spacing:-0.069px;">usługi</span>
<div class="a" style="left:349px;top:707px;width:316px;height:21px;background:#fdf9ef;border:1px solid #c6c6c6;"></div>
<span class="a t" style="left:354.50px;top:710px;font-size:12px;line-height:16px;color:#111111;letter-spacing:0.206px;">Google Ireland Ltd Gordon House</span>
<div class="a" style="left:667px;top:707px;width:107px;height:21px;background:#fdf9ef;border:1px solid #c6c6c6;"></div>
<span class="a t" style="left:693.50px;top:710px;font-size:12px;line-height:16px;color:#111111;letter-spacing:-0.570px;">IE6388047</span>
<div class="a" style="left:349px;top:730px;width:425px;height:22px;background:#fdf9ef;border:1px solid #c6c6c6;"></div>
<span class="a t" style="left:354.50px;top:734px;font-size:12px;line-height:16px;color:#111111;letter-spacing:0.154px;">Barrow Street 4/ , Dublin, Irlandia</span>
<div class="a" style="left:349px;top:756px;width:425px;height:21px;background:#fdf9ef;border:1px solid #c6c6c6;"></div>
<div class="a" style="left:349px;top:781px;width:268px;height:22px;background:#fdf9ef;border:1px solid #c6c6c6;"></div>
<span class="a t" style="left:351.30px;top:784px;font-size:12px;line-height:16px;color:#0505f5;font-weight:700;letter-spacing:0.097px;">Zakupy</span>
<div class="a" style="left:670px;top:781px;width:104px;height:22px;background:#fdf9ef;border:1px solid #c6c6c6;"></div>
<span class="a t" style="left:721.70px;top:784px;font-size:12px;line-height:16px;color:#111111;font-weight:700;letter-spacing:-0.060px;">1 000,00</span>
<div class="a" style="left:784px;top:683px;width:70px;height:22px;background:#fdf9ef;border:1px solid #c6c6c6;"></div>
<span class="a t" style="left:788.00px;top:686px;font-size:12px;line-height:16px;color:#0505f5;font-weight:700;letter-spacing:-0.066px;">2022-07-01</span>
<div class="a" style="left:857px;top:683px;width:363px;height:22px;background:#fdf9ef;border:1px solid #c6c6c6;"></div>
<span class="a t" style="left:862.00px;top:686px;font-size:12px;line-height:16px;color:#0505f5;font-weight:700;letter-spacing:0.166px;">Import usług</span>
<div class="a" style="left:784px;top:706px;width:436px;height:22px;background:#fdf9ef;border:1px solid #c6c6c6;"></div>
<span class="a t" style="left:789.80px;top:710px;font-size:12px;line-height:16px;color:#0505f5;font-weight:700;letter-spacing:0.019px;">Nabycia pozostałe</span>
<div class="a" style="left:784px;top:730px;width:436px;height:22px;background:#fdf9ef;border:1px solid #c6c6c6;"></div>
<span class="a t" style="left:789.80px;top:733px;font-size:12px;line-height:16px;color:#f20d0d;font-weight:700;letter-spacing:0.166px;">Import usług</span>
<div class="a" style="left:784px;top:753px;width:123px;height:22px;background:#fdf9ef;border:1px solid #c6c6c6;"></div>
<span class="a t" style="left:856.30px;top:757px;font-size:12px;line-height:16px;color:#111111;letter-spacing:-0.246px;">1 000,00</span>
<div class="a" style="left:968px;top:753px;width:123px;height:22px;background:#fdf9ef;border:1px solid #c6c6c6;"></div>
<span class="a t" style="left:1050.40px;top:757px;font-size:12px;line-height:16px;color:#111111;letter-spacing:-0.241px;">230,00</span>
<div class="a" style="left:1094px;top:753px;width:126px;height:22px;background:#fdf9ef;border:1px solid #c6c6c6;"></div>
<span class="a t" style="left:1169.50px;top:757px;font-size:12px;line-height:16px;color:#111111;letter-spacing:-0.246px;">1 230,00</span>
<div class="a" style="left:909px;top:753px;width:57px;height:22px;background:#fdf9ef;border:1px solid #c6c6c6;"></div>
<span class="a t" style="left:931.25px;top:757px;font-size:12px;line-height:16px;color:#111111;font-weight:700;letter-spacing:-0.359px;">23</span>
<div class="a" style="left:784px;top:777px;width:123px;height:21px;background:#fdf9ef;border:1px solid #c6c6c6;"></div>
<span class="a t" style="left:855.00px;top:780px;font-size:12px;line-height:16px;color:#111111;font-weight:700;letter-spacing:-0.060px;">1 000,00</span>
<div class="a" style="left:968px;top:777px;width:123px;height:21px;background:#fdf9ef;border:1px solid #c6c6c6;"></div>
<span class="a t" style="left:1049.40px;top:780px;font-size:12px;line-height:16px;color:#111111;font-weight:700;letter-spacing:-0.041px;">230,00</span>
<div class="a" style="left:1094px;top:777px;width:126px;height:21px;background:#fdf9ef;border:1px solid #c6c6c6;"></div>
<span class="a t" style="left:1168.20px;top:780px;font-size:12px;line-height:16px;color:#111111;font-weight:700;letter-spacing:-0.060px;">1 230,00</span>
<div class="a" style="left:1273px;top:211px;width:306px;height:631px;background:#f0f0f0;border:1px solid #d6d6d6;"></div>
<div class="a" style="left:1273px;top:211px;width:306px;height:27.5px;background:#d4d4d4;"></div>
<svg class="a" style="left:1284px;top:219.5px;" width="14" height="10" viewBox="0 0 14 10"><path d="M0.400 0.900h12.600M2.800 4.800h7.800M5.200 8.500h3.200" stroke="#444" stroke-width="1.200"/></svg>
<span class="a t" style="left:1303.60px;top:218px;font-size:12px;line-height:16px;color:#111;font-weight:700;letter-spacing:0.106px;">Filtrowanie</span>
<div class="a" style="left:1288px;top:257px;width:276px;height:511px;background:#fff;"></div>
<div class="a" style="left:1288px;top:257px;width:276px;height:1px;background:#c9c9c9;"></div>
<div class="a" style="left:1288px;top:281px;width:276px;height:1px;background:#c9c9c9;"></div>
<div class="a" style="left:1288px;top:306px;width:276px;height:1px;background:#c9c9c9;"></div>
<div class="a" style="left:1288px;top:330px;width:276px;height:1px;background:#c9c9c9;"></div>
<div class="a" style="left:1288px;top:354px;width:276px;height:1px;background:#c9c9c9;"></div>
<div class="a" style="left:1288px;top:379px;width:276px;height:1px;background:#c9c9c9;"></div>
<div class="a" style="left:1288px;top:403px;width:276px;height:1px;background:#c9c9c9;"></div>
<div class="a" style="left:1288px;top:427px;width:276px;height:1px;background:#c9c9c9;"></div>
<div class="a" style="left:1288px;top:450px;width:276px;height:1px;background:#c9c9c9;"></div>
<div class="a" style="left:1288px;top:474px;width:276px;height:1px;background:#c9c9c9;"></div>
<div class="a" style="left:1288px;top:497px;width:276px;height:1px;background:#c9c9c9;"></div>
<div class="a" style="left:1288px;top:521px;width:276px;height:1px;background:#c9c9c9;"></div>
<div class="a" style="left:1288px;top:545px;width:276px;height:1px;background:#c9c9c9;"></div>
<div class="a" style="left:1288px;top:569px;width:276px;height:1px;background:#c9c9c9;"></div>
<div class="a" style="left:1288px;top:592px;width:276px;height:1px;background:#c9c9c9;"></div>
<div class="a" style="left:1288px;top:617px;width:276px;height:1px;background:#c9c9c9;"></div>
<div class="a" style="left:1288px;top:257px;width:1px;height:361px;background:#c9c9c9;"></div>
<div class="a" style="left:1563px;top:257px;width:1px;height:361px;background:#c9c9c9;"></div>
<div class="a" style="left:1487px;top:257px;width:1px;height:361px;background:#c9c9c9;"></div>
<span class="a t" style="left:1307.00px;top:264px;font-size:12px;line-height:16px;color:#1e1e1e;letter-spacing:0.075px;">Nazwa kontrahenta</span>
<span class="a t" style="left:1307.00px;top:288px;font-size:12px;line-height:16px;color:#1e1e1e;letter-spacing:0.187px;">Numer VAT</span>
<span class="a t" style="left:1307.00px;top:313px;font-size:12px;line-height:16px;color:#1e1e1e;letter-spacing:0.206px;">Numer dokumentu</span>
<span class="a t" style="left:1307.00px;top:337px;font-size:12px;line-height:16px;color:#1e1e1e;letter-spacing:-0.056px;">Oznaczenie typu</span>
<span class="a t" style="left:1307.00px;top:361px;font-size:12px;line-height:16px;color:#1e1e1e;letter-spacing:-0.051px;">Rejestr VAT</span>
<span class="a t" style="left:1307.00px;top:386px;font-size:12px;line-height:16px;color:#1e1e1e;letter-spacing:-0.062px;">Opis</span>
<span class="a t" style="left:1307.00px;top:410px;font-size:12px;line-height:16px;color:#1e1e1e;letter-spacing:0.248px;">Na termin</span>
<div class="a" style="left:1518px;top:408px;width:15px;height:15px;background:#fff;border:1px solid #969696;border-radius:1px;"></div>
<div class="a" style="left:1522px;top:412px;width:7px;height:7px;background:#6e6e6e;"></div>
<span class="a t" style="left:1307.00px;top:433px;font-size:12px;line-height:16px;color:#1e1e1e;letter-spacing:0.082px;">Zapłacono</span>
<div class="a" style="left:1518px;top:432px;width:15px;height:15px;background:#fff;border:1px solid #969696;border-radius:1px;"></div>
<div class="a" style="left:1522px;top:436px;width:7px;height:7px;background:#6e6e6e;"></div>
<span class="a t" style="left:1307.00px;top:457px;font-size:12px;line-height:16px;color:#1e1e1e;letter-spacing:-0.388px;">Brak NIP</span>
<div class="a" style="left:1518px;top:455px;width:15px;height:15px;background:#fff;border:1px solid #969696;border-radius:1px;"></div>
<div class="a" style="left:1522px;top:459px;width:7px;height:7px;background:#6e6e6e;"></div>
<span class="a t" style="left:1307.00px;top:480px;font-size:12px;line-height:16px;color:#1e1e1e;letter-spacing:0.218px;">Korekta złe długi</span>
<div class="a" style="left:1518px;top:479px;width:15px;height:15px;background:#fff;border:1px solid #969696;border-radius:1px;"></div>
<div class="a" style="left:1522px;top:483px;width:7px;height:7px;background:#6e6e6e;"></div>
<span class="a t" style="left:1307.00px;top:504px;font-size:12px;line-height:16px;color:#1e1e1e;letter-spacing:-0.699px;">IP BOX</span>
<div class="a" style="left:1518px;top:502px;width:15px;height:15px;background:#fff;border:1px solid #969696;border-radius:1px;"></div>
<div class="a" style="left:1522px;top:506px;width:7px;height:7px;background:#6e6e6e;"></div>
<span class="a t" style="left:1307.00px;top:528px;font-size:12px;line-height:16px;color:#1e1e1e;letter-spacing:-0.191px;">Projekt IP BOX</span>
<span class="a t" style="left:1307.00px;top:552px;font-size:12px;line-height:16px;color:#1e1e1e;letter-spacing:0.119px;">Nabycie VAT marża</span>
<div class="a" style="left:1518px;top:550px;width:15px;height:15px;background:#fff;border:1px solid #969696;border-radius:1px;"></div>
<div class="a" style="left:1522px;top:554px;width:7px;height:7px;background:#6e6e6e;"></div>
<span class="a t" style="left:1307.00px;top:575px;font-size:12px;line-height:16px;color:#1e1e1e;letter-spacing:0.189px;">Wyłącz ze zdrowotnego</span>
<div class="a" style="left:1518px;top:574px;width:15px;height:15px;background:#fff;border:1px solid #969696;border-radius:1px;"></div>
<div class="a" style="left:1522px;top:578px;width:7px;height:7px;background:#6e6e6e;"></div>
<span class="a t" style="left:1307.00px;top:599px;font-size:12px;line-height:16px;color:#1e1e1e;letter-spacing:0.161px;">Typ dokumentu</span>
<span class="a t" style="left:1493.50px;top:598px;font-size:12px;line-height:16px;color:#1e1e1e;">-</span>
<div class="a" style="left:1288px;top:775.5px;width:276px;height:47px;background:#fff;border:1px solid #a8a8a8;"></div>
<svg class="a" style="left:1386px;top:786px;" width="26" height="21" viewBox="0 0 26 21"><path d="M0.800 6.700h8.800M4.600 12.700h7.200M8 18.600h5.900" stroke="#231f20" stroke-width="1.700"/><circle cx="18" cy="7.400" r="6.900" fill="#231f20"/><path d="M15.300 4.700l5.400 5.400M20.700 4.700l-5.400 5.400" stroke="#fff" stroke-width="1.600"/></svg>
<span class="a t" style="left:1416.40px;top:792px;font-size:12px;line-height:16px;color:#1e1e1e;letter-spacing:0.066px;">Usuń filtry</span>
<div class="a" style="left:125px;top:856px;width:1px;height:14px;background:#a2a2a2;"></div>
<div class="a" style="left:597.5px;top:856px;width:1px;height:14px;background:#a2a2a2;"></div>
<div class="a" style="left:735.5px;top:856px;width:1px;height:14px;background:#a2a2a2;"></div>
<div class="a" style="left:836.5px;top:856px;width:1px;height:14px;background:#a2a2a2;"></div>
<div class="a" style="left:1263px;top:856px;width:1px;height:14px;background:#a2a2a2;"></div>
<svg class="a" style="left:11.8px;top:854.6px;" width="13" height="15" viewBox="0 0 13 15"><path d="M2 0.700h4.800l4.200 4.200v7.600a1.500 1.500 0 0 1-1.500 1.500H2A1.400 1.400 0 0 1 .6 12.600V2.100A1.400 1.400 0 0 1 2 .7z" fill="none" stroke="#333" stroke-width="1.200"/><path d="M6.600 0.900v4.200h4.200" fill="none" stroke="#333" stroke-width="1.100"/></svg>
<span class="a t" style="left:29.50px;top:856px;font-size:11.5px;line-height:15px;color:#1e1e1e;letter-spacing:-0.223px;">Obiektów: 4</span>
<svg class="a" style="left:130px;top:855px;" width="15" height="14" viewBox="0 0 15 14"><rect x="0.900" y="1.200" width="12.700" height="9.400" rx="1.900" fill="none" stroke="#333" stroke-width="1.300"/><path d="M3.500 3.900h7.100M3.500 7.600h3.600" stroke="#333" stroke-width="1.100"/><path d="M9.800 9.400v4.200l1.800-1.100 1.800 1.100V9.400z" fill="#333"/><circle cx="11.600" cy="8.100" r="2.100" fill="#dedede" stroke="#333" stroke-width="1.200"/></svg>
<span class="a t" style="left:148.80px;top:856px;font-size:11.5px;line-height:15px;color:#1e1e1e;letter-spacing:-0.590px;">Licencja dla: NEONET CONSULTING S.C.</span>
<svg class="a" style="left:602.3px;top:855.3px;" width="15" height="15" viewBox="0 0 15 15"><circle cx="7.500" cy="7.500" r="6.700" fill="none" stroke="#333" stroke-width="1.300"/><ellipse cx="7.500" cy="7.500" rx="3" ry="6.700" fill="none" stroke="#333" stroke-width="1.100"/><path d="M0.800 7.500h13.400M1.800 4h11.400M1.800 11h11.400" stroke="#333" stroke-width="1"/></svg>
<span class="a t" style="left:621.30px;top:856px;font-size:11.5px;line-height:15px;color:#1e1e1e;letter-spacing:-0.014px;">taxmachine.pl</span>
<svg class="a" style="left:741.8px;top:855.5px;" width="13" height="14" viewBox="0 0 13 14"><path d="M4.600 0.300L2.600 13.700M10 0.300L8 13.700M1 4.600h11.600M0.400 9.400h11.600" stroke="#333" stroke-width="1.300"/></svg>
<span class="a t" style="left:759.70px;top:856px;font-size:11.5px;line-height:15px;color:#1e1e1e;letter-spacing:-0.747px;">3.26.1.4225</span>
<svg class="a" style="left:842.6px;top:855.3px;" width="12" height="15" viewBox="0 0 12 15"><ellipse cx="6" cy="3" rx="5.100" ry="2.300" fill="none" stroke="#333" stroke-width="1.200"/><path d="M0.900 3v9c0 1.300 2.300 2.300 5.100 2.300s5.100-1 5.100-2.300V3" fill="none" stroke="#333" stroke-width="1.200"/></svg>
<span class="a t" style="left:860.10px;top:856px;font-size:11.5px;line-height:15px;color:#1e1e1e;letter-spacing:-0.451px;">Baza SQLite 3.40.0: &quot;LocalDB.db&quot;.</span>
<svg class="a" style="left:1269px;top:855.3px;" width="15" height="15" viewBox="0 0 15 15"><rect x="0.700" y="0.700" width="11.400" height="10.800" rx="1.900" fill="none" stroke="#333" stroke-width="1.300"/><path d="M0.700 3.700h11.400" stroke="#333" stroke-width="1.100"/><circle cx="10.600" cy="10.700" r="3.900" fill="#333"/><path d="M8.600 10.700h4M10.600 8.700v4" stroke="#e4e4e4" stroke-width=".9"/><circle cx="10.600" cy="10.700" r="2.300" fill="none" stroke="#e4e4e4" stroke-width=".8"/></svg>
<span class="a t" style="left:1287.50px;top:856px;font-size:11.5px;line-height:15px;color:#1e1e1e;letter-spacing:-0.280px;">Aktualizacje: 2062-11-26</span>
<div class="a" style="left:1585px;top:856px;width:2px;height:2px;background:#b2b2b2;"></div>
<div class="a" style="left:1581px;top:860px;width:2px;height:2px;background:#b2b2b2;"></div>
<div class="a" style="left:1585px;top:860px;width:2px;height:2px;background:#b2b2b2;"></div>
<div class="a" style="left:1577px;top:864px;width:2px;height:2px;background:#b2b2b2;"></div>
<div class="a" style="left:1581px;top:864px;width:2px;height:2px;background:#b2b2b2;"></div>
<div class="a" style="left:1585px;top:864px;width:2px;height:2px;background:#b2b2b2;"></div>
<svg class="a" style="left:0px;top:0px;pointer-events:none;" width="1600" height="880" viewBox="0 0 1600 880"><path d="M1121 132.500L1099.200 188.200L1094 171.100L1029.400 227.800A9.600 9.600 0 0 1 1015.800 214.400L1081.100 155.700L1063.400 148.600Z" fill="#5798d6" fill-opacity=".78"/></svg>
</body></html>
